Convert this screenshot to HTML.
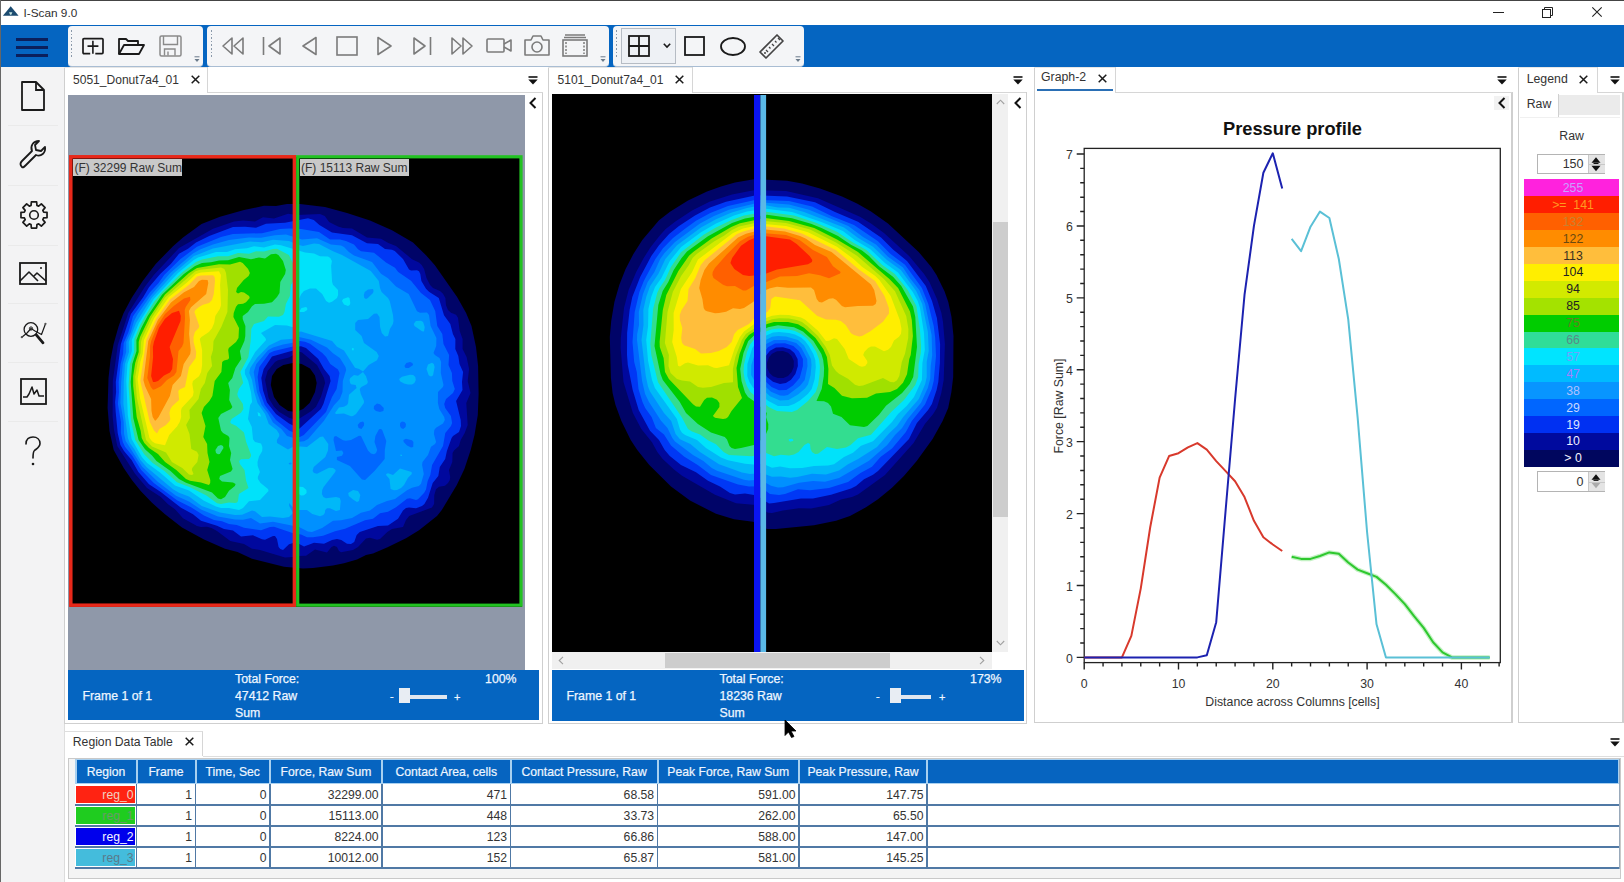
<!DOCTYPE html><html><head><meta charset="utf-8"><style>
*{margin:0;padding:0;box-sizing:border-box}
html,body{width:1624px;height:882px;overflow:hidden;background:#fff;font-family:"Liberation Sans",sans-serif;font-size:12px;color:#222}
.a{position:absolute}
.t{position:absolute;white-space:nowrap;line-height:1}
</style></head><body><div class="a" style="left:0px;top:0px;width:1624px;height:1px;background:#444"></div>
<div class="a" style="left:0px;top:0px;width:1px;height:882px;background:#666"></div>
<svg class="a" style="left:2px;top:5px;overflow:visible" width="18" height="13" viewBox="0 0 18 13"><path d="M0.9 10.8L8.7 1.3L16.6 10.8Z" fill="#1b4b70"/><path d="M7 7.3H10.4L9.3 9.8H8.1Z" fill="#c9e6e2"/></svg>
<div class="t" style="left:23.5px;top:7.61px;font-size:11.8px;color:#2e2e2e">I-Scan 9.0</div>
<div class="a" style="left:1493px;top:12px;width:11px;height:1px;background:#222"></div>
<svg class="a" style="left:1542px;top:7px;overflow:visible" width="11" height="11" viewBox="0 0 11 11"><rect x="0.5" y="2.5" width="8" height="8" fill="none" stroke="#222" stroke-width="1"/><path d="M2.5 2.5V0.5H10.5V8.5H8.5" fill="none" stroke="#222" stroke-width="1"/></svg>
<svg class="a" style="left:1592px;top:7px;overflow:visible" width="10" height="10" viewBox="0 0 10 10"><path d="M0.3 0.3L9.7 9.7M9.7 0.3L0.3 9.7" stroke="#222" stroke-width="1.1"/></svg>
<div class="a" style="left:1px;top:25px;width:1623px;height:42px;background:#0565c1"></div>
<div class="a" style="left:16px;top:38.2px;width:32px;height:2.6px;background:#0b1f5c"></div>
<div class="a" style="left:16px;top:46px;width:32px;height:2.6px;background:#0b1f5c"></div>
<div class="a" style="left:16px;top:54px;width:32px;height:2.6px;background:#0b1f5c"></div>
<div class="a" style="left:67.5px;top:26px;width:135.5px;height:40.5px;background:#f4f5f7;border-radius:4px;border-bottom:1px solid #a9bdd3"></div>
<div class="a" style="left:71.0px;top:30.0px;width:1.2px;height:1.6px;background:#8a99aa"></div>
<div class="a" style="left:71.0px;top:33.6px;width:1.2px;height:1.6px;background:#8a99aa"></div>
<div class="a" style="left:71.0px;top:37.2px;width:1.2px;height:1.6px;background:#8a99aa"></div>
<div class="a" style="left:71.0px;top:40.8px;width:1.2px;height:1.6px;background:#8a99aa"></div>
<div class="a" style="left:71.0px;top:44.4px;width:1.2px;height:1.6px;background:#8a99aa"></div>
<div class="a" style="left:71.0px;top:48.0px;width:1.2px;height:1.6px;background:#8a99aa"></div>
<div class="a" style="left:71.0px;top:51.6px;width:1.2px;height:1.6px;background:#8a99aa"></div>
<div class="a" style="left:71.0px;top:55.2px;width:1.2px;height:1.6px;background:#8a99aa"></div>
<svg class="a" style="left:194px;top:56px;overflow:visible" width="6" height="7" viewBox="0 0 6 7"><path d="M0.5 0.8H5.5" stroke="#6a7a8a" stroke-width="1"/><path d="M0.5 3L3 6L5.5 3Z" fill="#6a7a8a"/></svg>
<div class="a" style="left:207px;top:26px;width:401.5px;height:40.5px;background:#f4f5f7;border-radius:4px;border-bottom:1px solid #a9bdd3"></div>
<div class="a" style="left:210.5px;top:30.0px;width:1.2px;height:1.6px;background:#8a99aa"></div>
<div class="a" style="left:210.5px;top:33.6px;width:1.2px;height:1.6px;background:#8a99aa"></div>
<div class="a" style="left:210.5px;top:37.2px;width:1.2px;height:1.6px;background:#8a99aa"></div>
<div class="a" style="left:210.5px;top:40.8px;width:1.2px;height:1.6px;background:#8a99aa"></div>
<div class="a" style="left:210.5px;top:44.4px;width:1.2px;height:1.6px;background:#8a99aa"></div>
<div class="a" style="left:210.5px;top:48.0px;width:1.2px;height:1.6px;background:#8a99aa"></div>
<div class="a" style="left:210.5px;top:51.6px;width:1.2px;height:1.6px;background:#8a99aa"></div>
<div class="a" style="left:210.5px;top:55.2px;width:1.2px;height:1.6px;background:#8a99aa"></div>
<svg class="a" style="left:599.5px;top:56px;overflow:visible" width="6" height="7" viewBox="0 0 6 7"><path d="M0.5 0.8H5.5" stroke="#6a7a8a" stroke-width="1"/><path d="M0.5 3L3 6L5.5 3Z" fill="#6a7a8a"/></svg>
<div class="a" style="left:612.5px;top:26px;width:191.5px;height:40.5px;background:#f4f5f7;border-radius:4px;border-bottom:1px solid #a9bdd3"></div>
<div class="a" style="left:616.0px;top:30.0px;width:1.2px;height:1.6px;background:#8a99aa"></div>
<div class="a" style="left:616.0px;top:33.6px;width:1.2px;height:1.6px;background:#8a99aa"></div>
<div class="a" style="left:616.0px;top:37.2px;width:1.2px;height:1.6px;background:#8a99aa"></div>
<div class="a" style="left:616.0px;top:40.8px;width:1.2px;height:1.6px;background:#8a99aa"></div>
<div class="a" style="left:616.0px;top:44.4px;width:1.2px;height:1.6px;background:#8a99aa"></div>
<div class="a" style="left:616.0px;top:48.0px;width:1.2px;height:1.6px;background:#8a99aa"></div>
<div class="a" style="left:616.0px;top:51.6px;width:1.2px;height:1.6px;background:#8a99aa"></div>
<div class="a" style="left:616.0px;top:55.2px;width:1.2px;height:1.6px;background:#8a99aa"></div>
<svg class="a" style="left:795px;top:56px;overflow:visible" width="6" height="7" viewBox="0 0 6 7"><path d="M0.5 0.8H5.5" stroke="#6a7a8a" stroke-width="1"/><path d="M0.5 3L3 6L5.5 3Z" fill="#6a7a8a"/></svg>
<svg class="a" style="left:82px;top:38px;overflow:visible" width="22" height="17" viewBox="0 0 22 17"><path d="M8.2 15.6H2Q1 15.6 1 14.6V1.6Q1 0.6 2 0.6H20Q21 0.6 21 1.6V14.6Q21 15.6 20 15.6H13.3" fill="none" stroke="#1a1a1a" stroke-width="1.7"/><path d="M10.9 2.8V15.8M5.5 8.1H16.4" stroke="#1a1a1a" stroke-width="1.6"/></svg>
<svg class="a" style="left:118px;top:37px;overflow:visible" width="27" height="19" viewBox="0 0 27 19"><path d="M1 17V2H8L10 4H20V8" fill="none" stroke="#1a1a1a" stroke-width="1.8" stroke-linejoin="round"/><path d="M1 17L6 8H26L21 17Z" fill="none" stroke="#1a1a1a" stroke-width="1.8" stroke-linejoin="round"/></svg>
<svg class="a" style="left:159px;top:35px;overflow:visible" width="23" height="22" viewBox="0 0 23 22"><rect x="1" y="1" width="21" height="20" rx="1.5" fill="none" stroke="#8a8a8a" stroke-width="1.5"/><path d="M4.5 1V9.5H18.5V1M5.5 20.5V14H16V20.5M9 16.5V20.5" fill="none" stroke="#8a8a8a" stroke-width="1.4"/></svg>
<svg class="a" style="left:222px;top:37px;overflow:visible" width="22" height="18" viewBox="0 0 22 18"><path d="M10 1L1 9L10 17ZM21 1L12 9L21 17Z" fill="none" stroke="#7b7b7b" stroke-width="1.6" stroke-linejoin="round"/></svg>
<svg class="a" style="left:262px;top:36px;overflow:visible" width="19" height="20" viewBox="0 0 19 20"><path d="M1.5 1V19" stroke="#7b7b7b" stroke-width="1.6"/><path d="M18 2L7 10L18 18Z" fill="none" stroke="#7b7b7b" stroke-width="1.6" stroke-linejoin="round"/></svg>
<svg class="a" style="left:301px;top:36px;overflow:visible" width="16" height="20" viewBox="0 0 16 20"><path d="M15 1.5L2 10L15 18.5Z" fill="none" stroke="#7b7b7b" stroke-width="1.6" stroke-linejoin="round"/></svg>
<svg class="a" style="left:336px;top:36px;overflow:visible" width="22" height="20" viewBox="0 0 22 20"><rect x="1" y="1" width="20" height="18" fill="none" stroke="#7b7b7b" stroke-width="1.6"/></svg>
<svg class="a" style="left:377px;top:36px;overflow:visible" width="16" height="20" viewBox="0 0 16 20"><path d="M1 1.5L14 10L1 18.5Z" fill="none" stroke="#7b7b7b" stroke-width="1.6" stroke-linejoin="round"/></svg>
<svg class="a" style="left:413px;top:36px;overflow:visible" width="19" height="20" viewBox="0 0 19 20"><path d="M17.5 1V19" stroke="#7b7b7b" stroke-width="1.6"/><path d="M1 2L12 10L1 18Z" fill="none" stroke="#7b7b7b" stroke-width="1.6" stroke-linejoin="round"/></svg>
<svg class="a" style="left:451px;top:37px;overflow:visible" width="22" height="18" viewBox="0 0 22 18"><path d="M1 1L10 9L1 17ZM12 1L21 9L12 17Z" fill="none" stroke="#7b7b7b" stroke-width="1.6" stroke-linejoin="round"/></svg>
<svg class="a" style="left:486px;top:38px;overflow:visible" width="27" height="15" viewBox="0 0 27 15"><rect x="1" y="1" width="17" height="13" rx="1" fill="none" stroke="#7b7b7b" stroke-width="1.6"/><path d="M18 6L25 2V13L18 9" fill="none" stroke="#7b7b7b" stroke-width="1.6" stroke-linejoin="round"/></svg>
<svg class="a" style="left:524px;top:35px;overflow:visible" width="26" height="21" viewBox="0 0 26 21"><path d="M1 5H7L9 1H17L19 5H25V20H1Z" fill="none" stroke="#7b7b7b" stroke-width="1.6" stroke-linejoin="round"/><circle cx="13" cy="12" r="5" fill="none" stroke="#7b7b7b" stroke-width="1.6"/></svg>
<svg class="a" style="left:562px;top:34px;overflow:visible" width="26" height="23" viewBox="0 0 26 23"><path d="M3 1H23M2 3.5H24" stroke="#7b7b7b" stroke-width="1.5"/><rect x="1" y="6" width="24" height="16" fill="none" stroke="#7b7b7b" stroke-width="1.6"/><path d="M4 8V20M22 8V20" stroke="#7b7b7b" stroke-width="1.5" stroke-dasharray="2 1.5"/></svg>
<div class="a" style="left:621px;top:28px;width:55px;height:36px;border:1px solid #b6bcc4;background:#eef1f5"></div>
<svg class="a" style="left:628px;top:35px;overflow:visible" width="22" height="22" viewBox="0 0 22 22"><rect x="1" y="1" width="20" height="20" fill="none" stroke="#1a1a1a" stroke-width="1.8"/><path d="M11 1V21M1 11H21" stroke="#1a1a1a" stroke-width="1.8"/></svg>
<svg class="a" style="left:663px;top:43px;overflow:visible" width="8" height="5" viewBox="0 0 8 5"><path d="M0.8 0.8L4 4L7.2 0.8" fill="none" stroke="#1a1a1a" stroke-width="1.6"/></svg>
<svg class="a" style="left:684px;top:36px;overflow:visible" width="21" height="20" viewBox="0 0 21 20"><rect x="1" y="1" width="19" height="18" fill="none" stroke="#1a1a1a" stroke-width="1.8"/></svg>
<svg class="a" style="left:720px;top:37px;overflow:visible" width="26" height="19" viewBox="0 0 26 19"><ellipse cx="13" cy="9.5" rx="12" ry="8.5" fill="none" stroke="#1a1a1a" stroke-width="1.8"/></svg>
<svg class="a" style="left:758px;top:33px;overflow:visible" width="27" height="27" viewBox="0 0 27 27"><path d="M2 19L19 2L25 8L8 25Z" fill="none" stroke="#444" stroke-width="1.7" stroke-linejoin="round"/><path d="M8 17L10 19M11 14L12.5 15.5M14 11L16 13M17 8L18.5 9.5M20 5L22 7" stroke="#444" stroke-width="1.3"/><circle cx="7" cy="20" r="1" fill="#444"/></svg>
<div class="a" style="left:1px;top:67px;width:63px;height:815px;background:#f3f3f4"></div>
<div class="a" style="left:64px;top:67px;width:1px;height:815px;background:#dcdcdc"></div>
<svg class="a" style="left:21px;top:81px;overflow:visible" width="24" height="30" viewBox="0 0 24 30"><path d="M1 1H15L23 9V29H1Z" fill="none" stroke="#1a1a1a" stroke-width="1.8" stroke-linejoin="round"/><path d="M15 1V9H23" fill="none" stroke="#1a1a1a" stroke-width="1.8"/></svg>
<svg class="a" style="left:19px;top:140px;overflow:visible" width="28" height="30" viewBox="0 0 28 30"><path d="M3 27 C1 25 1 23 3 21 L13 11 C11 6 14 1 20 1 L16 5 L17 10 L22 11 L26 7 C27 13 22 17 17 15 L7 25 C5 27 4 28 3 27 Z" fill="none" stroke="#1a1a1a" stroke-width="1.8" stroke-linejoin="round"/></svg>
<svg class="a" style="left:19.5px;top:200.5px;overflow:visible" width="28" height="28" viewBox="0 0 28 28"><polygon points="27.03,11.36 27.03,16.64 23.55,16.96 22.84,18.67 25.09,21.35 21.35,25.09 18.67,22.84 16.96,23.55 16.64,27.03 11.36,27.03 11.04,23.55 9.33,22.84 6.65,25.09 2.91,21.35 5.16,18.67 4.45,16.96 0.97,16.64 0.97,11.36 4.45,11.04 5.16,9.33 2.91,6.65 6.65,2.91 9.33,5.16 11.04,4.45 11.36,0.97 16.64,0.97 16.96,4.45 18.67,5.16 21.35,2.91 25.09,6.65 22.84,9.33 23.55,11.04" fill="none" stroke="#1a1a1a" stroke-width="1.7" stroke-linejoin="round"/><circle cx="14" cy="14" r="4.3" fill="none" stroke="#1a1a1a" stroke-width="1.6"/></svg>
<svg class="a" style="left:19px;top:262px;overflow:visible" width="28" height="24" viewBox="0 0 28 24"><rect x="1" y="1" width="26" height="21" fill="none" stroke="#1a1a1a" stroke-width="1.8"/><path d="M1 19L10 10L19 19M14 15L18 11L27 19" fill="none" stroke="#1a1a1a" stroke-width="1.6" stroke-linejoin="round"/><circle cx="22" cy="6" r="1" fill="#1a1a1a"/></svg>
<svg class="a" style="left:19px;top:316px;overflow:visible" width="29" height="29" viewBox="0 0 29 29"><circle cx="11.9" cy="13.5" r="6.8" fill="none" stroke="#1a1a1a" stroke-width="1.3"/><path d="M17.3 18.8L24 26.8" stroke="#1a1a1a" stroke-width="2.8" stroke-linecap="round"/><path d="M2.8 21.2L8 17L12 12.5L16 15L22.5 18.5L26.5 7.8" fill="none" stroke="#1a1a1a" stroke-width="1.2" stroke-linejoin="round"/><circle cx="2.8" cy="21.2" r="1.1" fill="#555"/><circle cx="26.5" cy="7.8" r="1.1" fill="#555"/><circle cx="12" cy="12.5" r="1.6" fill="none" stroke="#1a1a1a" stroke-width="1"/></svg>
<svg class="a" style="left:20px;top:378px;overflow:visible" width="27" height="27" viewBox="0 0 27 27"><rect x="1" y="1" width="25" height="25" fill="none" stroke="#1a1a1a" stroke-width="1.8"/><path d="M3 19H7L9 16L12 9L14 16L17 12L19 18H24" fill="none" stroke="#1a1a1a" stroke-width="1.5" stroke-linejoin="round"/></svg>
<svg class="a" style="left:24px;top:436px;overflow:visible" width="18" height="31" viewBox="0 0 18 31"><path d="M2 8C2 3 5 1 9 1C13 1 16 3.5 16 7.5C16 11 13 12.5 10.5 14.5C9 15.7 9 17 9 22" fill="none" stroke="#1a1a1a" stroke-width="1.6" stroke-linecap="round"/><circle cx="9" cy="28" r="1.3" fill="#1a1a1a"/></svg>
<div class="a" style="left:8px;top:125px;width:50px;height:1px;background:#eaeaea"></div>
<div class="a" style="left:8px;top:185px;width:50px;height:1px;background:#eaeaea"></div>
<div class="a" style="left:8px;top:245px;width:50px;height:1px;background:#eaeaea"></div>
<div class="a" style="left:8px;top:303px;width:50px;height:1px;background:#eaeaea"></div>
<div class="a" style="left:8px;top:362px;width:50px;height:1px;background:#eaeaea"></div>
<div class="a" style="left:8px;top:421px;width:50px;height:1px;background:#eaeaea"></div>
<div class="a" style="left:64.3px;top:67px;width:478.7px;height:656.5px;border:1.5px solid #cfcfcf;border-top:none;border-right:none;background:#fff"></div>
<div class="a" style="left:541.5px;top:92px;width:1.5px;height:631.5px;background:#cfcfcf"></div>
<div class="a" style="left:207.5px;top:92px;width:335px;height:1px;background:#d6d6d6"></div>
<div class="a" style="left:64.3px;top:67px;width:143.2px;height:1px;background:#e6e6e6"></div>
<div class="a" style="left:207px;top:67px;width:1px;height:26px;background:#d6d6d6"></div>
<div class="t" style="left:73px;top:73.60px;font-size:12.05px;color:#333">5051_Donut7a4_01</div>
<svg class="a" style="left:190.5px;top:75px;overflow:visible" width="9" height="9" viewBox="0 0 9 9"><path d="M0.7 0.7L8.3 8.3M8.3 0.7L0.7 8.3" stroke="#1a1a1a" stroke-width="1.5"/></svg>
<svg class="a" style="left:528px;top:76px;overflow:visible" width="10" height="9" viewBox="0 0 10 9"><path d="M0.5 1H9.5" stroke="#111" stroke-width="1.6"/><path d="M0.3 3.6H9.7L5 8.6Z" fill="#111"/></svg>
<div class="a" style="left:67.5px;top:95px;width:457px;height:575px;background:#8f98a9"></div>
<svg class="a" style="left:529px;top:97px;overflow:visible" width="8" height="12" viewBox="0 0 8 12"><path d="M6.5 1L1.5 6L6.5 11" fill="none" stroke="#111" stroke-width="2"/></svg>
<svg class="a" style="left:0;top:0" width="1624" height="882">
<rect x="70" y="157" width="452" height="450" fill="#000"/>
<path fill="#000468" fill-rule="evenodd" d="M313.0 568.1L303.0 568.4L284.0 566.7L252.0 558.7L237.5 552.0L225.0 548.7L204.0 539.5L182.0 527.4L165.0 514.3L152.0 502.8L140.7 491.0L131.9 480.0L123.7 468.0L113.7 450.0L109.5 431.0L107.6 408.0L108.5 378.0L110.5 360.0L113.6 344.0L118.7 326.0L123.6 313.0L131.6 298.0L142.7 281.0L155.7 264.0L173.0 246.2L183.0 237.5L201.5 224.0L220.0 216.7L244.0 210.1L264.0 205.7L276.0 206.0L287.0 204.1L300.0 204.1L325.0 206.9L347.0 212.9L370.0 220.6L392.0 230.3L413.0 242.5L426.0 255.2L434.7 265.0L457.1 297.0L466.1 313.0L471.5 326.0L476.0 347.0L478.1 366.0L478.6 394.0L477.8 415.0L474.5 435.0L470.7 450.0L464.4 469.0L456.8 485.0L441.8 510.0L437.0 515.9L419.0 530.2L406.0 538.2L387.0 547.6L373.0 553.4L366.0 554.9L357.0 559.4L344.0 563.3L333.0 565.6L313.0 568.1ZM296.2 412.0L303.1 409.0L309.6 403.0L315.0 392.0L316.7 383.0L315.0 375.6L310.0 368.5L301.7 364.0L294.0 362.8L283.3 365.0L276.7 369.0L272.0 375.9L270.8 385.0L274.0 396.9L279.6 405.0L288.2 411.0L296.2 412.0Z"/>
<path fill="#00089e" fill-rule="evenodd" d="M293.0 557.0L285.0 557.6L260.0 549.9L252.0 548.7L244.0 543.9L230.3 541.0L217.0 531.0L211.5 528.0L207.0 526.7L201.0 527.0L197.0 526.1L183.0 518.2L175.0 509.2L168.0 504.2L160.8 497.0L147.0 487.9L135.2 474.0L117.3 446.0L114.0 430.0L112.6 416.0L112.8 381.0L117.8 345.0L128.3 313.0L145.0 286.6L154.0 274.7L179.0 248.1L213.0 228.7L234.0 221.5L243.0 220.4L255.0 221.4L263.0 217.2L274.0 218.5L288.0 213.8L297.0 215.0L320.0 214.0L324.8 216.0L329.1 222.0L338.0 226.6L343.0 228.1L352.0 228.4L367.0 237.6L381.0 238.7L388.3 243.0L396.0 245.9L412.0 259.2L419.0 262.6L421.7 265.0L424.1 269.0L426.5 278.0L430.1 285.0L433.0 287.9L440.0 291.0L443.0 293.7L445.4 298.0L446.0 305.2L448.0 310.1L451.0 312.8L456.0 314.8L458.0 317.8L459.7 331.0L462.6 339.0L462.6 349.0L466.6 357.0L469.1 369.0L467.7 381.0L470.5 393.0L466.3 403.0L467.7 425.0L464.7 433.0L460.7 440.0L459.0 446.0L454.0 450.5L452.6 453.0L452.3 462.0L449.0 470.0L450.2 477.0L449.8 480.0L448.0 483.1L445.0 485.8L439.0 486.8L436.0 489.3L434.3 495.0L434.1 504.0L432.0 507.5L409.2 516.0L406.0 519.9L403.0 527.1L392.0 529.0L387.3 532.0L380.0 539.0L377.0 539.7L370.0 537.7L366.0 538.4L358.0 547.0L353.0 550.1L341.0 552.3L339.0 551.0L337.0 546.9L334.0 545.8L331.5 547.0L327.0 552.6L315.0 549.5L306.0 555.8L297.0 556.0L293.0 557.0ZM295.5 421.0L311.0 411.2L316.0 406.8L321.0 396.7L325.1 383.0L324.0 378.0L317.0 365.0L302.0 352.6L298.0 351.3L294.0 352.0L293.0 355.3L289.0 357.5L278.0 360.3L275.0 362.0L267.6 371.0L265.1 380.0L268.6 398.0L274.0 406.7L279.0 411.8L289.0 417.7L293.0 418.9L294.0 421.6L295.5 421.0Z"/>
<path fill="#0038f5" fill-rule="evenodd" d="M283.0 550.1L280.3 549.0L278.6 547.0L277.0 539.0L275.0 536.0L273.0 535.9L265.0 539.7L262.0 539.3L253.0 535.3L241.0 536.4L233.0 530.4L224.0 529.1L217.0 525.7L201.0 520.8L193.0 514.3L181.0 507.7L160.8 492.0L149.0 484.3L138.4 472.0L131.6 460.0L124.0 451.0L120.4 445.0L117.7 433.0L115.7 412.0L115.1 402.0L116.1 392.0L115.8 382.0L120.9 344.0L130.9 314.0L143.0 297.6L149.0 287.3L160.2 274.0L171.0 263.8L179.0 253.8L188.0 248.8L196.0 242.6L209.2 236.0L233.0 227.1L245.0 226.7L256.0 227.8L266.0 223.8L285.0 222.7L308.0 218.3L313.8 220.0L319.4 225.0L332.0 232.6L352.0 235.3L367.0 243.3L378.0 244.1L385.0 249.0L392.0 249.8L394.8 251.0L403.0 259.0L409.0 269.4L411.0 270.4L417.0 270.2L419.0 271.3L420.3 274.0L421.4 281.0L426.0 288.8L429.0 291.8L438.8 298.0L444.0 315.3L450.3 324.0L452.9 334.0L455.4 339.0L455.3 349.0L458.3 356.0L459.5 364.0L463.1 372.0L462.0 382.0L462.5 390.0L456.1 401.0L460.7 420.0L461.0 426.0L459.0 431.9L453.0 436.0L451.6 438.0L446.9 451.0L445.2 459.0L439.8 467.0L438.3 476.0L432.7 483.0L428.0 497.7L424.4 504.0L422.0 506.0L416.0 508.2L409.0 507.4L406.0 508.0L403.0 510.5L398.0 518.7L388.0 525.5L378.0 526.1L359.8 532.0L356.7 535.0L354.2 542.0L351.0 544.0L347.0 543.8L341.3 540.0L337.0 539.0L332.0 540.0L324.0 543.8L314.0 542.8L304.0 546.4L297.2 543.0L294.0 542.7L289.0 544.3L283.0 550.1ZM294.1 431.0L299.0 428.9L320.9 409.0L323.4 404.0L330.6 381.0L329.6 376.0L324.0 369.1L318.3 359.0L306.0 348.1L301.0 346.2L294.0 347.0L293.0 350.6L272.0 356.5L263.7 369.0L261.3 378.0L263.0 390.3L267.0 402.6L276.0 414.1L289.0 423.6L293.0 425.5L294.1 431.0Z"/>
<path fill="#0068ff" fill-rule="evenodd" d="M313.0 537.2L307.0 537.2L301.0 534.4L294.0 533.4L274.0 526.7L270.0 527.0L261.0 530.2L244.0 527.8L236.8 525.0L229.0 524.0L222.0 521.2L214.0 520.0L204.0 515.5L191.0 507.2L177.0 500.3L153.8 483.0L141.0 469.7L132.5 456.0L125.0 446.8L122.8 442.0L120.9 433.0L121.0 422.0L117.9 404.0L119.0 392.0L118.7 382.0L120.6 364.0L123.1 354.0L123.7 343.0L128.5 332.0L133.0 316.3L150.0 292.3L158.6 283.0L164.2 275.0L180.5 259.0L197.0 246.8L221.0 237.0L233.0 234.0L262.0 233.2L280.0 229.1L289.0 228.4L301.0 228.9L319.0 232.0L330.0 239.5L340.0 239.6L346.0 241.0L354.0 244.6L358.0 249.3L361.0 251.2L374.0 252.7L386.0 262.5L395.0 267.7L398.2 272.0L411.0 280.7L421.0 293.1L430.0 300.0L435.2 311.0L437.3 326.0L442.3 334.0L443.5 344.0L449.1 355.0L448.5 365.0L451.9 373.0L452.3 381.0L454.8 389.0L453.0 393.0L446.0 399.0L444.2 404.0L445.2 408.0L450.9 416.0L452.1 423.0L451.0 426.0L445.3 433.0L443.0 446.0L432.1 465.0L430.3 475.0L427.7 481.0L426.0 489.4L424.0 493.1L418.0 499.3L416.0 500.0L410.0 498.2L407.0 498.8L396.0 507.3L388.0 511.8L380.0 513.3L373.0 518.8L365.0 520.2L345.0 528.8L335.0 531.3L323.0 535.8L313.0 537.2ZM299.8 437.0L303.8 435.0L326.0 412.0L332.0 397.0L336.6 389.0L339.5 373.0L338.0 369.4L330.3 364.0L326.1 357.0L322.3 353.0L310.0 343.8L305.0 341.8L300.0 341.1L294.0 342.0L293.0 346.5L274.0 350.9L269.6 353.0L259.3 367.0L257.6 377.0L259.4 391.0L264.7 405.0L276.0 420.0L289.0 430.6L293.0 432.2L294.0 437.6L299.8 437.0Z"/>
<path fill="#0090ff" fill-rule="evenodd" d="M312.0 532.1L308.0 531.6L299.0 527.1L273.0 521.8L260.0 523.5L251.0 518.0L243.0 519.7L235.0 519.4L218.0 516.4L201.0 509.6L189.0 501.4L176.0 495.8L158.0 482.0L142.0 466.4L125.7 441.0L124.1 434.0L123.7 422.0L120.4 403.0L121.2 382.0L122.8 364.0L126.2 352.0L126.2 342.0L130.8 332.0L134.0 320.9L137.8 314.0L150.4 296.0L170.2 273.0L193.0 253.4L200.0 249.5L213.0 244.6L229.0 240.0L249.0 237.5L261.0 237.8L275.0 235.3L286.0 234.5L302.0 239.5L317.0 238.3L331.0 244.6L341.0 245.4L344.0 246.9L348.9 252.0L354.0 255.5L372.0 262.1L381.0 273.8L388.0 278.3L396.0 286.4L408.7 294.0L417.0 311.2L420.0 312.7L427.0 312.6L429.0 314.9L430.6 326.0L436.4 338.0L436.2 346.0L433.5 353.0L434.9 355.0L439.5 358.0L441.1 362.0L440.8 373.0L443.5 385.0L442.9 387.0L438.0 392.0L437.9 403.0L439.3 409.0L444.2 417.0L444.8 420.0L443.0 423.4L436.0 427.8L434.3 430.0L433.9 434.0L436.1 442.0L435.0 443.9L431.0 446.8L428.0 455.0L422.5 462.0L422.1 465.0L423.8 474.0L421.0 483.8L418.9 486.0L412.0 487.8L407.0 490.3L395.0 498.9L387.0 500.9L377.0 505.0L370.0 510.6L361.0 512.7L352.0 518.0L341.0 520.2L333.0 520.7L322.1 528.0L312.0 532.1ZM297.3 442.0L304.0 441.2L308.1 439.0L324.0 420.7L334.0 405.2L339.8 399.0L342.5 392.0L342.8 381.0L346.2 370.0L345.5 367.0L339.9 358.0L333.0 353.3L327.0 347.6L311.0 339.8L299.0 337.0L294.0 337.6L293.0 342.8L283.0 344.4L273.0 347.6L268.0 350.3L256.3 364.0L253.7 372.0L256.9 392.0L261.6 405.0L267.7 413.0L273.0 422.5L281.4 429.0L287.0 436.1L293.0 437.8L294.0 442.3L297.3 442.0ZM408.8 368.0L413.1 365.0L412.4 363.0L410.0 361.9L406.3 363.0L404.4 366.0L405.6 368.0L408.8 368.0ZM383.4 411.0L383.8 408.0L380.0 404.2L377.0 403.6L374.0 406.0L373.8 409.0L376.0 411.0L380.0 411.9L383.4 411.0ZM361.5 429.0L364.0 425.5L364.1 423.0L363.0 421.4L360.0 422.3L357.7 425.0L358.6 428.0L361.5 429.0ZM403.2 429.0L405.6 427.0L406.0 424.0L404.5 422.0L402.0 421.6L400.1 423.0L400.0 426.0L401.0 428.1L403.2 429.0ZM365.1 480.0L374.5 471.0L384.7 459.0L384.8 450.0L386.3 441.0L382.2 430.0L381.0 429.1L379.0 429.3L375.4 436.0L374.5 442.0L377.2 450.0L376.0 453.0L374.0 454.2L371.0 453.6L368.0 450.5L361.0 435.9L359.0 435.7L351.0 440.0L346.0 440.7L343.0 440.3L336.0 436.1L334.0 436.7L333.5 440.0L336.0 451.1L342.0 450.6L343.4 453.0L342.0 455.7L336.9 457.0L336.9 460.0L349.9 466.0L362.0 479.6L365.1 480.0ZM413.2 447.0L413.4 442.0L412.0 440.2L406.0 438.8L403.4 440.0L403.7 442.0L407.0 445.4L411.0 447.6L413.2 447.0Z"/>
<path fill="#00b8f8" fill-rule="evenodd" d="M283.0 518.0L270.0 516.4L262.0 517.0L255.0 511.2L252.0 510.4L242.0 514.7L235.0 514.9L220.0 512.5L201.7 506.0L189.0 496.4L179.0 492.8L173.0 489.2L147.0 467.5L140.4 460.0L134.2 449.0L129.8 443.0L127.9 438.0L123.4 404.0L123.8 381.0L125.0 364.0L129.0 352.0L128.7 342.0L136.0 323.0L151.6 298.0L174.1 273.0L194.0 256.1L213.0 248.5L250.0 241.6L262.0 242.3L273.0 239.8L289.0 240.9L298.0 244.8L303.0 245.9L314.0 243.6L319.0 243.9L333.0 251.3L342.0 254.9L370.8 271.0L378.8 281.0L380.0 288.0L381.6 292.0L388.0 298.0L389.7 301.0L393.0 315.0L393.5 321.0L392.9 324.0L389.9 329.0L388.0 336.1L385.0 336.4L381.8 333.0L380.1 327.0L379.5 317.0L377.0 313.4L374.0 313.7L368.0 318.9L358.0 319.9L355.2 323.0L355.2 330.0L361.6 336.0L364.0 343.1L376.6 352.0L378.8 356.0L377.0 360.3L368.7 365.0L363.0 371.4L359.2 369.0L355.0 367.7L344.0 350.5L337.0 346.7L332.1 341.0L301.0 331.6L294.0 332.5L293.0 338.7L281.0 339.7L269.0 345.4L257.0 357.7L250.2 368.0L249.3 373.0L252.0 380.0L254.2 392.0L257.5 403.0L265.1 414.0L268.8 424.0L276.7 430.0L279.2 434.0L279.3 436.0L276.9 440.0L277.0 443.0L288.0 449.5L293.0 446.7L294.0 447.7L300.0 446.6L307.0 447.1L320.0 436.9L323.0 436.6L328.3 444.0L328.0 450.6L325.3 457.0L313.7 467.0L312.6 471.0L314.0 473.0L317.0 473.8L329.0 467.8L333.0 467.9L335.7 470.0L335.2 472.0L323.6 487.0L322.2 490.0L321.9 494.0L323.4 497.0L326.0 498.3L336.0 496.9L339.8 498.0L340.7 501.0L339.9 510.0L336.0 511.1L330.0 508.3L327.0 508.2L325.2 510.0L324.8 513.0L323.3 515.0L320.0 516.3L312.3 514.0L307.0 510.0L295.3 510.0L289.0 502.9L289.2 506.0L293.0 513.0L289.0 517.0L283.0 518.0ZM367.9 298.0L373.0 293.0L373.6 291.0L373.0 289.0L368.0 289.6L364.7 292.0L363.8 295.0L364.3 298.0L366.0 298.9L367.9 298.0ZM424.0 331.6L422.0 331.3L414.5 326.0L413.7 324.0L415.9 321.0L421.0 320.8L423.1 322.0L424.7 327.0L424.0 331.6ZM432.0 376.3L430.0 376.3L428.6 375.0L426.5 369.0L428.0 364.5L432.0 362.8L433.8 364.0L434.6 367.0L433.1 375.0L432.0 376.3ZM353.0 416.0L351.0 416.2L344.0 413.5L336.0 414.1L335.0 413.0L339.0 407.4L344.0 406.7L347.1 405.0L348.1 403.0L349.0 394.8L356.6 388.0L355.7 385.0L351.0 384.3L350.2 383.0L349.5 380.0L350.3 378.0L354.0 374.9L358.0 375.7L363.0 372.1L366.0 376.2L367.9 382.0L367.0 384.0L361.3 387.0L359.7 389.0L360.8 394.0L364.0 401.0L363.9 403.0L356.0 413.9L353.0 416.0ZM412.0 384.4L408.0 384.6L404.0 383.6L400.0 381.2L399.2 379.0L402.0 376.8L410.0 374.8L413.2 375.0L415.3 377.0L415.8 380.0L414.4 383.0L412.0 384.4ZM402.0 456.1L400.7 456.0L400.0 454.7L402.0 454.8L402.0 456.1ZM291.8 464.0L291.0 462.6L288.9 463.0L288.8 464.0L290.0 464.6L291.8 464.0ZM397.0 490.1L394.0 490.3L390.6 489.0L389.5 479.0L386.1 475.0L386.2 474.0L388.0 473.2L393.0 474.9L400.0 468.6L411.6 472.0L411.8 474.0L408.0 477.7L404.0 485.0L401.0 488.0L397.0 490.1ZM359.0 501.1L357.0 501.9L353.0 499.6L348.8 496.0L348.2 493.0L353.1 490.0L358.0 491.0L360.3 495.0L359.0 501.1Z"/>
<path fill="#00e2fa" fill-rule="evenodd" d="M239.0 510.1L229.0 508.0L221.0 508.0L216.0 506.6L204.0 500.7L189.0 490.6L175.0 485.5L160.0 472.6L147.1 463.0L142.0 457.3L131.6 439.0L127.8 415.0L126.3 381.0L127.5 364.0L131.9 351.0L131.8 340.0L138.9 323.0L153.7 299.0L178.0 272.9L193.8 260.0L198.0 257.6L216.0 252.1L227.0 252.0L235.0 249.2L247.0 248.3L254.0 246.2L264.0 247.4L275.0 244.5L281.0 245.3L305.0 252.6L314.0 253.6L320.0 256.2L328.0 256.4L330.3 258.0L331.9 261.0L331.1 266.0L332.1 282.0L333.0 284.7L338.0 290.0L338.1 295.0L337.0 298.0L332.0 301.8L329.0 302.8L326.1 301.0L322.2 294.0L316.0 288.6L310.0 288.5L303.9 291.0L301.3 294.0L294.5 308.0L294.9 311.0L298.2 314.0L298.0 321.0L296.7 325.0L293.0 327.2L287.0 325.5L275.0 324.9L261.0 333.0L265.4 338.0L266.1 340.0L255.2 352.0L244.9 370.0L244.9 374.0L248.2 381.0L251.0 392.6L252.1 402.0L250.1 405.0L248.0 419.0L251.8 427.0L253.0 439.3L255.0 441.9L261.0 443.5L262.4 447.0L262.2 451.0L259.0 456.5L257.5 462.0L257.7 466.0L259.9 472.0L257.8 477.0L257.9 479.0L260.6 483.0L268.0 489.0L268.5 491.0L260.0 499.9L249.0 501.3L243.0 508.1L239.0 510.1ZM348.0 306.0L344.0 304.5L342.0 301.0L343.1 299.0L348.0 297.2L349.5 298.0L350.3 303.0L349.7 305.0L348.0 306.0ZM304.0 312.0L300.0 312.1L299.5 311.0L301.6 308.0L306.0 307.1L307.2 308.0L307.2 310.0L304.0 312.0ZM353.0 350.8L351.7 349.0L353.0 347.8L353.9 349.0L353.0 350.8ZM261.0 416.4L258.2 416.0L257.6 412.0L260.0 413.6L261.0 416.4ZM304.0 495.2L301.0 495.6L298.8 494.0L297.5 490.0L299.0 486.8L303.0 486.9L306.4 490.0L306.6 493.0L304.0 495.2Z"/>
<path fill="#33dd90" fill-rule="evenodd" d="M235.0 503.1L229.0 502.5L221.0 503.9L217.0 503.2L206.0 495.3L190.0 487.2L177.0 482.3L164.4 471.0L152.7 463.0L144.0 454.1L135.2 440.0L130.9 420.0L128.6 386.0L129.9 364.0L134.1 352.0L134.4 339.0L139.8 326.0L145.8 315.0L154.0 302.0L162.0 292.0L182.6 272.0L196.0 262.0L202.0 259.5L218.0 256.2L228.0 256.3L238.0 253.1L249.0 253.7L256.0 251.3L264.0 251.5L273.0 249.0L277.0 248.8L288.9 255.0L293.8 265.0L298.5 269.0L299.1 272.0L290.9 285.0L289.9 296.0L285.9 304.0L284.5 312.0L283.0 315.0L279.0 316.8L268.0 316.4L264.0 321.0L254.0 324.1L251.3 329.0L250.7 341.0L248.4 357.0L240.4 372.0L243.2 383.0L239.0 388.8L237.3 394.0L238.0 396.8L242.9 404.0L243.4 409.0L241.0 412.8L231.6 419.0L230.2 422.0L231.0 423.4L236.0 425.7L244.0 432.4L246.2 442.0L251.1 455.0L250.7 457.0L249.0 459.0L241.0 459.3L239.1 461.0L239.9 464.0L244.5 470.0L246.0 480.6L248.5 488.0L238.9 494.0L238.0 501.0L237.0 502.4L235.0 503.1Z"/>
<path fill="#00cc00" fill-rule="evenodd" d="M221.0 499.2L218.0 498.5L212.0 492.6L186.0 482.7L179.0 479.0L170.5 471.0L156.5 461.0L152.0 455.4L145.0 449.2L138.6 440.0L133.3 418.0L130.7 382.0L132.3 364.0L136.5 351.0L136.4 340.0L141.0 328.6L147.6 316.0L162.0 294.8L183.9 274.0L195.0 266.0L202.0 263.1L211.0 262.3L219.0 260.4L228.0 260.2L239.0 257.0L251.0 259.3L259.0 257.5L265.0 258.4L271.0 254.2L276.0 253.8L278.4 255.0L283.0 261.0L285.8 270.0L285.1 274.0L280.3 282.0L279.5 293.0L277.0 297.1L272.0 302.2L264.0 303.7L255.0 304.1L252.0 306.3L248.0 312.0L242.7 316.0L242.7 319.0L245.4 326.0L245.3 336.0L244.4 341.0L239.9 351.0L241.3 359.0L235.4 368.0L232.3 378.0L228.2 383.0L229.9 390.0L229.2 400.0L232.4 407.0L230.9 409.0L221.0 413.9L218.3 418.0L221.0 430.6L223.0 432.9L228.3 436.0L229.5 438.0L229.0 446.0L231.2 453.0L230.0 460.0L232.6 469.0L231.0 471.6L220.0 476.0L219.2 479.0L222.0 481.5L233.0 482.4L235.6 484.0L234.9 486.0L229.0 490.7L225.0 496.9L221.0 499.2ZM219.8 454.0L223.5 448.0L223.0 446.0L221.0 444.9L218.0 446.0L215.4 450.0L216.0 453.1L218.0 454.3L219.8 454.0Z"/>
<path fill="#a0e000" fill-rule="evenodd" d="M209.0 485.1L201.0 482.6L190.0 480.7L186.0 479.0L176.3 470.0L165.1 462.0L158.0 454.0L149.0 448.1L144.3 443.0L141.7 438.0L140.7 431.0L136.7 417.0L133.2 386.0L133.2 376.0L135.2 363.0L138.7 352.0L138.7 342.0L140.0 337.0L150.0 316.4L165.0 294.5L189.0 273.1L197.0 268.1L219.0 264.3L230.0 264.5L240.0 261.7L242.7 263.0L248.1 269.0L249.9 273.0L248.6 276.0L243.7 280.0L237.0 288.0L236.1 292.0L238.0 293.6L241.0 292.1L244.0 292.5L249.1 296.0L249.7 298.0L246.0 302.3L243.0 303.7L238.0 304.2L236.0 306.8L233.7 313.0L233.4 317.0L239.0 328.0L238.5 338.0L236.0 342.0L228.8 348.0L228.2 350.0L229.1 358.0L228.0 359.4L224.0 360.4L222.2 362.0L221.4 372.0L214.7 381.0L212.4 396.0L209.4 401.0L203.9 407.0L201.6 413.0L205.5 426.0L203.3 437.0L207.1 444.0L207.5 453.0L209.5 462.0L207.2 470.0L210.3 480.0L210.2 483.0L209.0 485.1Z"/>
<path fill="#d0ea00" fill-rule="evenodd" d="M192.0 475.1L189.0 474.4L182.3 468.0L171.9 462.0L166.0 452.6L152.0 446.4L146.0 440.0L136.9 398.0L135.2 377.0L137.8 362.0L140.5 353.0L141.0 342.0L142.1 338.0L151.5 318.0L165.0 297.5L195.0 271.6L200.0 269.8L221.0 267.4L224.4 269.0L226.0 273.0L228.0 290.0L227.4 312.0L221.3 327.0L213.5 341.0L213.0 350.0L210.9 357.0L212.1 366.0L207.3 373.0L204.8 383.0L200.9 389.0L198.5 399.0L189.4 410.0L189.9 418.0L186.1 425.0L189.5 434.0L191.3 449.0L197.0 451.7L198.6 455.0L197.3 462.0L192.2 468.0L191.9 470.0L193.5 474.0L192.0 475.1Z"/>
<path fill="#ffee00" fill-rule="evenodd" d="M165.0 445.2L155.0 443.3L152.0 441.3L149.5 438.0L140.0 397.9L137.6 379.0L140.4 362.0L142.7 354.0L144.0 340.0L154.2 318.0L168.9 297.0L187.0 282.6L196.0 274.0L201.0 272.5L219.0 271.3L220.9 275.0L220.1 285.0L221.0 305.3L219.8 309.0L215.3 316.0L214.2 323.0L212.0 328.3L208.9 332.0L201.4 337.0L199.8 339.0L202.1 350.0L202.1 365.0L201.1 372.0L199.0 376.2L192.9 381.0L192.3 384.0L193.6 392.0L192.9 396.0L181.7 408.0L180.9 411.0L181.2 417.0L179.7 422.0L177.0 426.6L169.2 435.0L165.0 445.2Z"/>
<path fill="#ffbe3c" fill-rule="evenodd" d="M157.0 433.6L154.0 430.4L149.8 422.0L140.3 381.0L146.3 340.0L156.6 318.0L170.0 299.5L189.0 284.8L197.0 276.6L201.0 275.4L213.0 275.3L214.6 277.0L215.0 281.0L213.8 294.0L212.0 299.9L209.1 303.0L203.0 304.7L199.1 307.0L195.4 310.0L194.4 312.0L199.3 326.0L198.7 328.0L194.9 332.0L193.5 337.0L193.6 342.0L196.2 352.0L195.7 358.0L189.0 367.2L185.0 387.0L180.0 389.2L178.3 391.0L179.1 400.0L172.4 406.0L170.4 409.0L169.4 413.0L170.3 419.0L169.7 421.0L166.0 424.9L159.4 429.0L157.0 433.6Z"/>
<path fill="#ff8c00" fill-rule="evenodd" d="M156.0 420.2L155.0 420.8L152.7 417.0L151.5 411.0L151.1 399.0L145.0 386.0L143.4 380.0L148.3 341.0L158.0 319.7L171.0 302.6L184.0 292.2L194.0 287.0L199.0 280.9L202.0 279.7L207.6 280.0L208.3 283.0L206.2 294.0L191.0 307.3L188.9 311.0L189.9 320.0L189.1 334.0L190.7 350.0L190.2 354.0L183.7 364.0L180.9 376.0L172.6 385.0L169.9 396.0L158.6 417.0L156.0 420.2Z"/>
<path fill="#ff6000" fill-rule="evenodd" d="M155.0 389.3L153.0 389.8L150.8 387.0L147.3 378.0L150.0 356.0L150.1 346.0L151.2 341.0L157.2 326.0L165.0 314.1L174.0 305.7L184.0 298.4L190.0 296.7L190.4 300.0L185.7 307.0L184.7 310.0L185.0 318.0L183.5 343.0L182.0 346.8L178.5 351.0L176.4 372.0L174.0 375.5L167.0 380.0L161.0 386.3L155.0 389.3Z"/>
<path fill="#ff1e00" fill-rule="evenodd" d="M155.0 382.0L153.0 381.9L151.1 376.0L153.1 357.0L152.9 347.0L153.9 342.0L159.0 327.7L165.0 318.7L172.0 313.0L179.0 310.7L180.8 316.0L180.5 321.0L169.6 347.0L173.0 359.0L172.2 369.0L170.0 372.4L164.0 375.6L158.0 380.9L155.0 382.0Z"/>
<rect x="70.8" y="156.8" width="223.6" height="448.4" fill="none" stroke="#e8281a" stroke-width="3.5"/>
<rect x="297.7" y="156.8" width="223.3" height="448.4" fill="none" stroke="#22c222" stroke-width="3.2"/>
</svg>
<div class="a" style="left:72.8px;top:159.3px;width:109px;height:16.4px;background:#c9c9c9"></div>
<div class="t" style="left:74.5px;top:162.44px;font-size:12px;color:#333">(F) 32299 Raw Sum</div>
<div class="a" style="left:299.5px;top:159.3px;width:109px;height:16.4px;background:#c9c9c9"></div>
<div class="t" style="left:301px;top:162.44px;font-size:12px;color:#333">(F) 15113 Raw Sum</div>
<div class="a" style="left:67.5px;top:669.5px;width:471.5px;height:50.5px;background:#0565c1"></div>
<div class="t" style="left:82.5px;top:690.19px;font-size:12.3px;color:#eef6ff;-webkit-text-stroke:0.25px #eef6ff">Frame 1 of 1</div>
<div class="t" style="left:235px;top:673.29px;font-size:12.3px;color:#eef6ff;-webkit-text-stroke:0.25px #eef6ff">Total Force:</div>
<div class="t" style="left:235px;top:689.89px;font-size:12.3px;color:#eef6ff;-webkit-text-stroke:0.25px #eef6ff">47412 Raw</div>
<div class="t" style="left:235px;top:706.59px;font-size:12.3px;color:#eef6ff;-webkit-text-stroke:0.25px #eef6ff">Sum</div>
<div class="t" style="right:1107.5px;top:673.29px;font-size:12.3px;color:#eef6ff;-webkit-text-stroke:0.25px #eef6ff">100%</div>
<div class="t" style="left:390px;top:690.69px;font-size:11px;color:#eef6ff;-webkit-text-stroke:0.25px #eef6ff">-</div>
<div class="a" style="left:409px;top:694.7px;width:37.5px;height:4px;background:#dfe6ef"></div>
<div class="a" style="left:398.6px;top:688px;width:11.3px;height:14.8px;background:#e8edf3"></div>
<div class="t" style="left:454px;top:691.69px;font-size:11px;color:#eef6ff;-webkit-text-stroke:0.25px #eef6ff">+</div>
<div class="a" style="left:548.3px;top:67px;width:478.7px;height:656.5px;border:1.5px solid #cfcfcf;border-top:none;border-right:none;background:#fff"></div>
<div class="a" style="left:1025.5px;top:92px;width:1.5px;height:631.5px;background:#cfcfcf"></div>
<div class="a" style="left:692px;top:92px;width:334px;height:1px;background:#d6d6d6"></div>
<div class="a" style="left:548.3px;top:67px;width:144px;height:1px;background:#e6e6e6"></div>
<div class="a" style="left:691.8px;top:67px;width:1px;height:26px;background:#d6d6d6"></div>
<div class="t" style="left:557.5px;top:73.60px;font-size:12.05px;color:#333">5101_Donut7a4_01</div>
<svg class="a" style="left:675px;top:75px;overflow:visible" width="9" height="9" viewBox="0 0 9 9"><path d="M0.7 0.7L8.3 8.3M8.3 0.7L0.7 8.3" stroke="#1a1a1a" stroke-width="1.5"/></svg>
<svg class="a" style="left:1013px;top:76px;overflow:visible" width="10" height="9" viewBox="0 0 10 9"><path d="M0.5 1H9.5" stroke="#111" stroke-width="1.6"/><path d="M0.3 3.6H9.7L5 8.6Z" fill="#111"/></svg>
<div class="a" style="left:552px;top:94px;width:440px;height:558px;background:#000"></div>
<svg class="a" style="left:0;top:0" width="1624" height="882">
<path fill="#000468" fill-rule="evenodd" d="M776.0 529.0L767.0 529.0L753.0 521.8L734.0 519.3L716.0 513.8L690.0 500.6L671.0 486.4L649.3 465.0L637.3 450.0L630.7 440.0L621.4 421.0L615.5 405.0L612.6 393.0L610.9 378.0L609.8 337.0L611.2 321.0L614.4 302.0L619.3 285.0L625.6 269.0L633.4 254.0L642.3 240.0L659.0 220.2L670.0 211.7L688.0 200.5L707.0 191.4L721.0 186.4L735.0 182.6L754.0 179.2L787.0 180.7L802.0 183.5L820.0 188.5L842.0 196.4L857.0 203.5L871.0 211.6L888.0 223.5L918.7 252.0L931.3 267.0L936.5 275.0L944.4 291.0L948.3 302.0L951.5 317.0L953.5 336.0L953.2 377.0L951.4 392.0L948.2 408.0L942.6 421.0L932.6 439.0L916.7 461.0L903.9 476.0L892.0 487.8L878.0 499.2L866.0 507.3L850.0 515.9L836.0 520.8L814.0 525.2L776.0 529.0Z"/>
<path fill="#00089e" fill-rule="evenodd" d="M772.0 513.0L768.0 512.8L756.0 504.9L736.0 503.2L715.0 494.8L682.0 475.7L674.0 469.6L662.7 459.0L657.3 452.0L652.0 442.3L641.3 429.0L632.9 413.0L623.5 382.0L620.6 348.0L620.8 338.0L624.0 308.0L628.6 290.0L636.2 272.0L643.7 258.0L650.7 247.0L660.2 235.0L665.7 229.0L675.0 221.8L692.0 210.6L710.0 201.4L732.0 194.4L755.0 190.0L786.0 191.1L818.0 198.2L860.0 216.7L871.0 223.5L884.0 233.1L909.1 256.0L924.1 274.0L929.4 282.0L937.0 299.0L941.4 313.0L943.0 322.0L944.9 344.0L943.7 380.0L941.3 393.0L937.0 407.8L933.2 414.0L924.9 424.0L913.6 443.0L885.0 475.1L858.0 494.5L852.0 497.0L841.0 499.5L829.0 505.0L811.0 508.5L799.0 508.2L783.0 510.4L772.0 513.0ZM783.4 378.0L788.0 376.0L791.6 372.0L793.7 367.0L793.8 361.0L791.5 356.0L788.0 352.8L783.0 351.0L777.0 351.2L772.0 353.8L769.0 357.3L767.0 363.0L767.2 368.0L769.5 373.0L773.0 376.2L778.0 378.1L783.4 378.0Z"/>
<path fill="#0038f5" fill-rule="evenodd" d="M774.0 503.1L769.0 503.5L757.0 495.6L745.0 493.6L735.0 494.5L730.0 493.0L720.0 486.4L708.0 480.7L696.0 472.2L681.0 464.9L669.8 456.0L664.7 450.0L659.0 440.0L650.0 430.8L638.7 410.0L632.7 390.0L627.8 365.0L627.0 355.0L627.1 333.0L629.6 310.0L632.3 297.0L640.2 277.0L651.3 256.0L659.0 245.2L669.1 234.0L679.0 226.0L695.0 215.4L710.0 207.5L726.0 201.7L756.0 195.3L787.0 196.5L815.0 202.3L835.0 212.1L858.0 221.7L881.0 237.4L893.0 249.4L907.0 260.9L925.8 286.0L932.0 301.0L936.9 318.0L940.1 344.0L939.9 363.0L938.3 382.0L936.6 390.0L931.9 404.0L928.1 410.0L916.9 423.0L909.0 439.0L878.0 471.0L873.0 474.7L864.0 479.3L856.0 486.1L851.0 488.6L831.0 494.8L813.0 498.4L801.0 498.6L774.0 503.1ZM785.9 383.0L791.0 379.8L795.4 374.0L797.9 366.0L797.6 359.0L794.4 353.0L790.0 349.3L783.0 347.2L776.0 347.5L770.0 350.7L765.8 356.0L763.3 364.0L763.7 371.0L767.0 376.9L773.0 381.8L780.0 383.9L785.9 383.0Z"/>
<path fill="#0068ff" fill-rule="evenodd" d="M779.0 495.1L770.0 493.9L759.0 486.3L749.0 486.4L738.0 484.6L711.0 475.1L697.7 465.0L684.0 456.6L671.0 445.4L664.0 434.4L655.9 428.0L651.6 417.0L645.2 408.0L642.5 402.0L638.5 389.0L636.8 372.0L634.2 362.0L632.5 342.0L634.7 312.0L639.4 292.0L643.8 281.0L655.4 259.0L663.0 248.3L673.0 238.1L685.0 228.7L696.0 220.8L710.3 213.0L728.0 206.1L756.0 199.7L789.0 201.1L812.0 206.4L832.0 216.2L854.0 225.0L878.0 241.2L890.0 253.6L905.0 264.8L921.9 288.0L928.3 304.0L933.7 326.0L935.2 338.0L936.0 356.0L933.7 381.0L931.7 389.0L925.0 404.4L911.8 421.0L905.9 432.0L892.0 448.5L880.5 457.0L872.0 466.7L860.5 473.0L848.0 482.0L829.0 487.9L810.0 490.3L798.0 489.3L785.0 493.9L779.0 495.1ZM786.3 390.0L793.0 385.4L799.7 378.0L802.9 366.0L802.9 359.0L798.8 351.0L793.4 346.0L785.0 343.3L775.0 343.4L768.0 347.2L762.7 354.0L759.6 363.0L759.2 372.0L763.0 379.0L771.5 387.0L779.0 390.2L786.3 390.0Z"/>
<path fill="#0090ff" fill-rule="evenodd" d="M783.0 487.2L778.0 487.6L771.0 485.8L760.0 479.5L749.0 480.4L744.0 479.8L717.0 470.8L711.8 468.0L703.4 461.0L693.0 454.9L675.0 441.5L672.3 438.0L667.5 428.0L661.0 420.7L649.0 402.0L645.1 394.0L642.1 381.0L637.0 340.0L637.2 334.0L639.0 325.0L638.8 312.0L643.0 294.0L647.7 282.0L654.4 272.0L660.2 259.0L664.5 253.0L675.0 242.0L700.0 223.4L714.0 215.9L729.0 209.8L757.0 202.9L766.0 202.8L789.0 204.5L809.0 209.8L848.3 226.0L863.1 237.0L876.0 244.6L888.0 256.8L903.0 267.4L909.8 278.0L919.3 290.0L925.1 304.0L931.6 335.0L932.2 355.0L930.7 366.0L930.2 379.0L927.8 388.0L921.0 402.8L907.7 419.0L902.1 428.0L895.0 435.0L887.2 445.0L869.0 460.7L839.0 478.1L825.0 481.7L813.0 480.9L799.0 482.8L783.0 487.2ZM787.9 395.0L800.0 385.8L804.7 380.0L807.5 366.0L807.2 359.0L801.4 348.0L796.2 343.0L786.0 339.9L774.0 339.9L766.2 344.0L759.7 352.0L755.4 365.0L755.2 374.0L759.6 381.0L771.0 391.8L780.0 395.5L784.0 395.8L787.9 395.0Z"/>
<path fill="#00b8f8" fill-rule="evenodd" d="M797.0 477.1L790.0 477.8L781.0 476.4L772.0 476.8L762.0 473.0L750.0 473.9L742.0 472.4L719.0 464.2L700.0 452.0L690.3 444.0L680.0 439.2L675.6 434.0L671.2 421.0L664.0 413.0L650.0 391.4L648.0 386.6L645.8 376.0L641.5 340.0L643.5 325.0L643.3 310.0L646.2 297.0L650.0 286.3L658.3 274.0L665.4 259.0L677.0 245.3L701.0 227.4L716.0 219.2L731.0 212.7L747.0 208.0L757.0 206.1L767.0 205.6L778.0 207.4L789.0 207.8L804.0 211.9L844.0 227.4L858.2 238.0L873.0 246.8L887.0 260.1L900.9 270.0L916.2 291.0L922.2 304.0L927.9 332.0L928.7 351.0L926.7 362.0L926.7 377.0L925.2 384.0L918.8 399.0L903.2 417.0L896.9 426.0L889.4 433.0L877.0 446.9L858.1 459.0L848.0 464.2L839.0 470.5L826.0 474.5L812.0 473.7L797.0 477.1ZM788.5 400.0L798.0 394.4L805.0 388.4L808.0 384.5L810.6 375.0L811.5 365.0L811.0 359.0L804.0 345.5L798.0 339.9L786.0 336.5L778.0 335.9L772.0 336.8L764.0 341.1L755.7 351.0L751.3 365.0L751.1 375.0L755.7 383.0L770.0 396.3L780.0 400.6L788.5 400.0Z"/>
<path fill="#00e2fa" fill-rule="evenodd" d="M802.0 468.0L790.0 468.3L780.0 466.6L772.0 467.7L763.0 463.8L754.0 464.5L745.0 463.8L728.0 460.3L721.0 457.5L706.0 448.0L697.0 440.0L685.1 435.0L682.0 432.8L680.0 429.4L676.9 419.0L654.9 388.0L652.0 380.0L648.1 361.0L646.2 340.0L648.1 326.0L648.4 309.0L651.2 297.0L655.0 286.9L661.4 278.0L669.8 261.0L681.1 247.0L701.0 232.3L716.0 223.6L734.0 215.4L747.0 211.5L766.0 208.7L792.0 211.9L822.0 222.2L842.9 231.0L854.7 240.0L870.0 248.9L884.9 263.0L898.0 272.4L912.8 292.0L917.7 301.0L920.0 308.0L924.0 333.0L924.8 350.0L922.4 363.0L921.9 380.0L914.0 397.0L906.6 406.0L898.0 414.0L892.0 422.0L873.0 441.2L861.0 445.8L853.0 452.8L844.0 457.1L834.0 464.3L828.0 465.6L814.0 466.0L802.0 468.0ZM788.3 406.0L794.0 404.1L800.0 400.5L807.8 394.0L811.7 389.0L814.7 379.0L815.8 367.0L815.3 360.0L813.3 354.0L808.8 346.0L805.1 341.0L801.0 337.6L795.0 334.6L789.0 333.1L779.0 332.1L773.0 332.6L763.0 337.0L756.1 343.0L752.3 348.0L747.4 364.0L747.3 376.0L749.4 382.0L753.0 387.5L768.0 400.8L778.0 405.9L788.3 406.0Z"/>
<path fill="#33dd90" fill-rule="evenodd" d="M774.0 456.2L765.0 452.5L752.0 456.2L729.0 455.0L723.6 452.0L716.0 444.2L708.0 440.2L700.0 434.5L692.0 431.5L688.0 429.0L681.6 417.0L658.0 382.2L651.3 355.0L650.3 344.0L653.1 309.0L657.2 293.0L659.5 288.0L665.0 279.9L670.9 267.0L681.0 252.3L704.0 234.6L716.0 227.5L731.0 220.2L744.0 215.4L766.0 211.7L794.0 215.6L816.0 222.8L837.0 231.8L853.0 242.5L866.5 250.0L882.0 264.8L894.9 274.0L907.8 290.0L916.4 306.0L919.9 329.0L921.1 346.0L920.8 353.0L918.6 364.0L918.2 377.0L915.3 385.0L904.0 399.9L891.2 412.0L871.0 434.8L858.0 438.3L850.6 445.0L846.0 447.4L837.0 448.9L827.0 447.1L818.0 453.8L815.0 453.9L812.0 452.0L810.6 449.0L810.0 443.9L808.0 443.0L804.4 445.0L798.6 452.0L794.0 454.4L789.0 455.6L781.0 454.7L774.0 456.2ZM791.9 412.0L797.0 409.9L808.0 400.9L815.7 392.0L818.1 385.0L819.7 373.0L819.9 366.0L818.9 359.0L816.3 352.0L811.5 344.0L806.3 338.0L801.0 334.0L795.0 331.1L789.0 329.6L779.0 328.6L772.0 329.3L766.0 331.5L760.3 335.0L753.0 340.8L749.8 345.0L747.0 352.0L743.9 365.0L743.6 372.0L744.6 379.0L747.0 386.2L750.4 392.0L769.0 407.3L777.0 411.1L791.9 412.0ZM792.9 441.0L793.5 440.0L792.0 438.7L789.2 439.0L788.5 440.0L790.0 441.7L792.9 441.0Z"/>
<path fill="#00cc00" fill-rule="evenodd" d="M741.0 448.1L735.0 448.9L731.6 448.0L729.5 446.0L727.0 439.6L724.8 437.0L711.0 432.6L697.9 424.0L686.0 412.9L679.8 402.0L662.8 380.0L660.5 374.0L654.5 346.0L658.3 305.0L662.7 291.0L668.3 282.0L673.7 270.0L681.6 258.0L687.0 251.6L708.0 236.2L732.0 223.1L745.0 218.4L767.0 214.7L792.0 218.2L811.0 223.7L821.5 228.0L838.0 236.1L851.0 244.7L862.0 250.5L869.0 256.0L879.0 266.3L893.0 276.8L901.3 286.0L913.0 306.5L915.3 317.0L917.0 347.0L913.2 377.0L909.7 384.0L902.1 393.0L886.0 405.8L879.0 414.8L867.4 426.0L864.0 427.0L850.0 425.2L841.5 417.0L833.0 413.8L831.0 406.4L828.0 402.9L824.0 401.3L816.5 401.0L821.7 389.0L823.8 376.0L824.1 368.0L823.2 360.0L821.4 354.0L813.4 341.0L803.0 331.6L794.0 327.2L778.0 325.2L768.0 327.3L754.0 335.6L748.3 341.0L743.5 353.0L740.2 369.0L741.5 381.0L745.0 392.6L748.0 397.1L757.0 403.3L766.9 413.0L766.1 417.0L768.3 424.0L768.2 429.0L765.6 435.0L758.0 443.1L754.0 445.1L741.0 448.1Z"/>
<path fill="#a0e000" fill-rule="evenodd" d="M723.0 419.0L715.0 417.7L712.9 416.0L719.4 407.0L719.4 403.0L717.0 399.7L712.0 397.6L707.0 397.8L704.2 400.0L700.0 406.8L696.0 406.4L693.0 404.3L668.9 379.0L665.0 372.0L663.6 358.0L659.8 347.0L659.6 342.0L662.8 310.0L666.3 295.0L678.4 271.0L689.0 255.7L693.2 252.0L712.0 238.3L731.3 227.0L740.0 223.3L765.0 218.1L789.0 220.9L814.2 228.0L837.0 239.5L858.0 252.1L889.4 279.0L898.1 288.0L910.0 311.6L911.8 320.0L912.9 336.0L910.7 355.0L909.3 359.0L907.0 374.2L903.0 382.8L897.0 388.9L890.0 392.1L876.0 393.6L867.0 397.7L852.0 398.3L842.0 395.8L834.4 388.0L828.0 383.9L828.4 369.0L826.9 357.0L823.3 349.0L815.5 338.0L804.0 327.8L798.0 324.2L788.0 322.1L774.0 321.9L767.0 324.0L760.0 327.7L749.0 335.0L745.0 340.0L739.6 354.0L736.5 368.0L738.0 386.9L742.0 398.0L731.5 411.0L728.0 416.9L726.0 418.4L723.0 419.0Z"/>
<path fill="#d0ea00" fill-rule="evenodd" d="M711.0 387.1L703.0 387.7L698.0 387.0L690.0 381.5L682.0 380.6L677.0 378.9L670.6 373.0L668.5 366.0L668.9 355.0L664.9 343.0L667.5 312.0L672.8 292.0L681.1 276.0L688.9 265.0L692.6 258.0L696.7 254.0L714.0 241.5L724.0 235.8L732.0 229.9L739.0 226.6L764.0 220.9L786.0 223.1L810.0 229.4L836.0 242.4L857.0 255.8L883.9 279.0L895.0 291.3L906.2 316.0L908.4 329.0L908.2 338.0L905.0 353.7L901.8 362.0L899.3 376.0L897.0 380.2L894.0 382.3L890.4 382.0L883.0 378.0L863.0 385.5L859.0 385.9L855.0 384.7L848.0 378.7L839.0 373.8L835.9 371.0L832.0 365.5L829.8 355.0L825.8 347.0L817.9 336.0L807.0 325.8L802.0 322.1L796.6 320.0L789.0 318.6L779.0 318.3L772.0 319.2L763.0 322.4L745.9 334.0L741.8 340.0L735.4 357.0L732.9 369.0L733.0 382.2L724.0 382.9L711.0 387.1Z"/>
<path fill="#ffee00" fill-rule="evenodd" d="M717.0 368.1L714.0 367.8L708.0 365.3L698.0 365.5L688.0 362.4L685.0 363.3L680.0 366.6L678.0 365.8L676.8 357.0L672.2 342.0L673.7 330.0L673.6 313.0L680.9 289.0L692.0 272.3L698.0 259.6L733.0 233.0L743.0 228.6L764.0 223.9L786.0 226.1L808.0 232.3L837.0 246.8L853.6 259.0L862.0 266.7L875.0 275.7L879.4 280.0L890.7 296.0L899.8 320.0L901.5 329.0L901.0 333.7L899.0 336.8L894.0 340.4L891.0 347.0L888.0 349.7L884.0 351.2L875.0 346.6L871.0 346.6L868.1 348.0L864.3 352.0L863.2 355.0L867.2 361.0L867.4 363.0L865.2 366.0L862.0 366.8L859.4 366.0L848.8 359.0L844.7 349.0L837.0 339.1L834.0 338.3L829.0 340.7L826.0 341.0L818.0 330.7L805.0 319.4L801.0 317.5L789.0 314.9L780.0 314.7L772.0 315.8L759.0 320.6L744.0 331.6L739.9 337.0L734.8 348.0L729.0 365.3L717.0 368.1Z"/>
<path fill="#ffbe3c" fill-rule="evenodd" d="M711.0 353.0L701.0 353.4L695.0 349.0L684.0 345.2L682.0 342.8L681.2 338.0L682.3 328.0L679.9 320.0L679.7 315.0L681.6 310.0L687.5 301.0L688.5 289.0L695.3 278.0L700.7 265.0L704.9 260.0L737.0 234.1L743.0 231.5L760.0 227.0L767.0 226.5L784.0 228.4L802.0 233.5L835.8 250.0L859.0 269.5L875.1 281.0L884.5 296.0L888.9 308.0L889.0 313.6L883.0 321.7L870.0 331.4L862.0 336.0L859.0 336.5L854.0 335.1L851.0 333.3L845.7 325.0L840.8 321.0L836.0 319.7L826.0 319.5L817.0 315.7L800.0 300.3L775.0 296.5L771.4 299.0L770.3 308.0L767.4 312.0L756.0 316.2L749.0 324.0L737.7 330.0L734.2 334.0L731.7 342.0L726.8 347.0L718.8 351.0L711.0 353.0Z"/>
<path fill="#ff8c00" fill-rule="evenodd" d="M719.0 313.1L715.0 313.2L707.0 311.3L705.0 310.2L703.7 308.0L702.4 299.0L699.2 288.0L700.7 280.0L704.4 270.0L709.0 263.6L738.0 237.4L746.0 233.7L763.0 229.3L785.0 231.4L800.0 236.0L806.0 238.8L815.0 244.9L831.5 252.0L871.0 284.4L874.2 290.0L876.5 301.0L875.7 304.0L873.0 305.7L858.0 305.9L845.0 307.3L841.9 306.0L836.0 299.7L833.0 298.2L829.0 298.8L822.0 302.5L819.0 302.0L816.7 299.0L814.0 290.0L811.0 287.6L788.0 287.8L777.0 286.7L770.0 288.3L763.6 291.0L753.1 302.0L744.0 308.0L740.0 309.1L733.0 308.2L726.0 311.7L719.0 313.1Z"/>
<path fill="#ff6000" fill-rule="evenodd" d="M746.0 290.4L743.0 290.5L735.0 286.1L727.0 286.2L723.0 284.8L713.5 278.0L712.4 275.0L712.7 272.0L714.9 268.0L727.0 254.2L740.0 241.2L748.0 236.7L761.0 232.8L786.0 235.0L799.6 240.0L813.0 250.1L826.9 257.0L833.0 266.3L840.7 272.0L840.0 273.5L829.0 278.3L820.0 275.3L809.0 273.3L797.0 276.1L780.0 276.5L767.0 281.8L756.0 284.8L746.0 290.4Z"/>
<path fill="#ff1e00" fill-rule="evenodd" d="M759.0 275.0L749.0 275.9L743.0 274.9L734.3 269.0L730.4 263.0L732.1 258.0L741.0 245.8L749.0 240.2L757.0 237.0L764.0 235.9L790.0 239.6L796.7 244.0L809.6 256.0L812.3 260.0L811.9 262.0L808.0 264.2L777.0 269.4L765.0 274.0L759.0 275.0Z"/>
<rect x="754" y="95" width="6.4" height="557" fill="#0a14f2"/>
<rect x="760.4" y="95" width="5.7" height="557" fill="#5ab8e6"/>
</svg>
<div class="a" style="left:992px;top:94px;width:16px;height:558px;background:#f0f0f0"></div>
<div class="a" style="left:993px;top:222px;width:15px;height:295px;background:#cdcdcd"></div>
<svg class="a" style="left:996px;top:99px;overflow:visible" width="9" height="6" viewBox="0 0 9 6"><path d="M0.8 5L4.5 1.2L8.2 5" fill="none" stroke="#a0a0a0" stroke-width="1.1"/></svg>
<svg class="a" style="left:996px;top:640px;overflow:visible" width="9" height="6" viewBox="0 0 9 6"><path d="M0.8 1L4.5 4.8L8.2 1" fill="none" stroke="#a0a0a0" stroke-width="1.1"/></svg>
<div class="a" style="left:552px;top:652px;width:440px;height:17px;background:#f0f0f0"></div>
<div class="a" style="left:665px;top:653px;width:225px;height:15px;background:#cdcdcd"></div>
<svg class="a" style="left:558px;top:656px;overflow:visible" width="6" height="9" viewBox="0 0 6 9"><path d="M5 0.8L1.2 4.5L5 8.2" fill="none" stroke="#a0a0a0" stroke-width="1.1"/></svg>
<svg class="a" style="left:979px;top:656px;overflow:visible" width="6" height="9" viewBox="0 0 6 9"><path d="M1 0.8L4.8 4.5L1 8.2" fill="none" stroke="#a0a0a0" stroke-width="1.1"/></svg>
<svg class="a" style="left:1013.5px;top:97px;overflow:visible" width="8" height="12" viewBox="0 0 8 12"><path d="M6.5 1L1.5 6L6.5 11" fill="none" stroke="#111" stroke-width="2"/></svg>
<div class="a" style="left:552px;top:670px;width:472px;height:50.5px;background:#0565c1"></div>
<div class="t" style="left:566.5px;top:690.19px;font-size:12.3px;color:#eef6ff;-webkit-text-stroke:0.25px #eef6ff">Frame 1 of 1</div>
<div class="t" style="left:719.5px;top:673.29px;font-size:12.3px;color:#eef6ff;-webkit-text-stroke:0.25px #eef6ff">Total Force:</div>
<div class="t" style="left:719.5px;top:689.89px;font-size:12.3px;color:#eef6ff;-webkit-text-stroke:0.25px #eef6ff">18236 Raw</div>
<div class="t" style="left:719.5px;top:706.59px;font-size:12.3px;color:#eef6ff;-webkit-text-stroke:0.25px #eef6ff">Sum</div>
<div class="t" style="right:622.5px;top:673.29px;font-size:12.3px;color:#eef6ff;-webkit-text-stroke:0.25px #eef6ff">173%</div>
<div class="t" style="left:876px;top:690.69px;font-size:11px;color:#eef6ff;-webkit-text-stroke:0.25px #eef6ff">-</div>
<div class="a" style="left:899px;top:694.7px;width:32px;height:4px;background:#dfe6ef"></div>
<div class="a" style="left:890px;top:688px;width:11.3px;height:14.8px;background:#e8edf3"></div>
<div class="t" style="left:939px;top:691.69px;font-size:11px;color:#eef6ff;-webkit-text-stroke:0.25px #eef6ff">+</div>
<div class="a" style="left:1034.3px;top:67px;width:478.5px;height:655.8px;border:1.5px solid #cfcfcf;border-top:none;border-right:none;background:#fff"></div>
<div class="a" style="left:1511.3px;top:92.3px;width:1.5px;height:630.5px;background:#cfcfcf"></div>
<div class="a" style="left:1115px;top:92.3px;width:397px;height:1px;background:#d6d6d6"></div>
<div class="a" style="left:1034.3px;top:67px;width:81px;height:1px;background:#e6e6e6"></div>
<div class="a" style="left:1115px;top:67px;width:1px;height:26px;background:#d6d6d6"></div>
<div class="t" style="left:1041px;top:71.39px;font-size:12.3px;color:#333">Graph-2</div>
<svg class="a" style="left:1098px;top:74px;overflow:visible" width="9" height="9" viewBox="0 0 9 9"><path d="M0.7 0.7L8.3 8.3M8.3 0.7L0.7 8.3" stroke="#1a1a1a" stroke-width="1.5"/></svg>
<div class="a" style="left:1037px;top:89.3px;width:75.5px;height:2px;background:#2a6fb5"></div>
<svg class="a" style="left:1497px;top:76px;overflow:visible" width="10" height="9" viewBox="0 0 10 9"><path d="M0.5 1H9.5" stroke="#111" stroke-width="1.6"/><path d="M0.3 3.6H9.7L5 8.6Z" fill="#111"/></svg>
<div class="a" style="left:1494px;top:95.5px;width:14.5px;height:14px;background:#f2f2f2"></div>
<svg class="a" style="left:1497.5px;top:97px;overflow:visible" width="8" height="12" viewBox="0 0 8 12"><path d="M6.5 1L1.5 6L6.5 11" fill="none" stroke="#111" stroke-width="2"/></svg>
<svg class="a" style="left:1034px;top:92px" width="478" height="630" viewBox="1034 92 478 630">
<text x="1292.5" y="135.2" text-anchor="middle" font-family="Liberation Sans" font-weight="bold" font-size="18.25" fill="#111">Pressure profile</text>
<rect x="1084.2" y="148.4" width="416.0999999999999" height="514.2" fill="none" stroke="#222" stroke-width="1.3"/>
<text x="1072.8" y="662.60" text-anchor="end" font-family="Liberation Sans" font-size="12.3" fill="#333">0</text>
<text x="1072.8" y="590.69" text-anchor="end" font-family="Liberation Sans" font-size="12.3" fill="#333">1</text>
<text x="1072.8" y="518.78" text-anchor="end" font-family="Liberation Sans" font-size="12.3" fill="#333">2</text>
<text x="1072.8" y="446.87" text-anchor="end" font-family="Liberation Sans" font-size="12.3" fill="#333">3</text>
<text x="1072.8" y="374.96" text-anchor="end" font-family="Liberation Sans" font-size="12.3" fill="#333">4</text>
<text x="1072.8" y="303.05" text-anchor="end" font-family="Liberation Sans" font-size="12.3" fill="#333">5</text>
<text x="1072.8" y="231.14" text-anchor="end" font-family="Liberation Sans" font-size="12.3" fill="#333">6</text>
<text x="1072.8" y="159.23" text-anchor="end" font-family="Liberation Sans" font-size="12.3" fill="#333">7</text>
<text x="1084.20" y="688" text-anchor="middle" font-family="Liberation Sans" font-size="12.3" fill="#333">0</text>
<text x="1178.50" y="688" text-anchor="middle" font-family="Liberation Sans" font-size="12.3" fill="#333">10</text>
<text x="1272.80" y="688" text-anchor="middle" font-family="Liberation Sans" font-size="12.3" fill="#333">20</text>
<text x="1367.10" y="688" text-anchor="middle" font-family="Liberation Sans" font-size="12.3" fill="#333">30</text>
<text x="1461.40" y="688" text-anchor="middle" font-family="Liberation Sans" font-size="12.3" fill="#333">40</text>
<path d="M1076.7 657.40H1084.2 M1080.2 643.02H1084.2 M1080.2 628.64H1084.2 M1080.2 614.25H1084.2 M1080.2 599.87H1084.2 M1076.7 585.49H1084.2 M1080.2 571.11H1084.2 M1080.2 556.73H1084.2 M1080.2 542.34H1084.2 M1080.2 527.96H1084.2 M1076.7 513.58H1084.2 M1080.2 499.20H1084.2 M1080.2 484.82H1084.2 M1080.2 470.43H1084.2 M1080.2 456.05H1084.2 M1076.7 441.67H1084.2 M1080.2 427.29H1084.2 M1080.2 412.91H1084.2 M1080.2 398.52H1084.2 M1080.2 384.14H1084.2 M1076.7 369.76H1084.2 M1080.2 355.38H1084.2 M1080.2 341.00H1084.2 M1080.2 326.61H1084.2 M1080.2 312.23H1084.2 M1076.7 297.85H1084.2 M1080.2 283.47H1084.2 M1080.2 269.09H1084.2 M1080.2 254.70H1084.2 M1080.2 240.32H1084.2 M1076.7 225.94H1084.2 M1080.2 211.56H1084.2 M1080.2 197.18H1084.2 M1080.2 182.79H1084.2 M1080.2 168.41H1084.2 M1076.7 154.03H1084.2 M1084.20 662.6V669.4 M1103.06 662.6V666.6 M1121.92 662.6V666.6 M1140.78 662.6V666.6 M1159.64 662.6V666.6 M1178.50 662.6V669.4 M1197.36 662.6V666.6 M1216.22 662.6V666.6 M1235.08 662.6V666.6 M1253.94 662.6V666.6 M1272.80 662.6V669.4 M1291.66 662.6V666.6 M1310.52 662.6V666.6 M1329.38 662.6V666.6 M1348.24 662.6V666.6 M1367.10 662.6V669.4 M1385.96 662.6V666.6 M1404.82 662.6V666.6 M1423.68 662.6V666.6 M1442.54 662.6V666.6 M1461.40 662.6V669.4 M1480.26 662.6V666.6 M1499.12 662.6V666.6" stroke="#222" stroke-width="1.4"/>
<text x="1292.5" y="705.5" text-anchor="middle" font-family="Liberation Sans" font-size="12.3" fill="#333">Distance across Columns [cells]</text>
<text transform="translate(1062.5 406) rotate(-90)" x="0" y="0" text-anchor="middle" font-family="Liberation Sans" font-size="12.3" fill="#333">Force [Raw Sum]</text>
<polyline points="1291.66,556.73 1301.09,558.88 1310.52,558.88 1319.95,556.01 1329.38,552.41 1338.81,553.85 1348.24,562.48 1357.67,569.67 1367.10,573.27 1376.53,576.86 1385.96,584.77 1395.39,594.12 1404.82,604.19 1414.25,616.41 1423.68,627.92 1433.11,642.30 1442.54,652.37 1451.97,657.40 1489.69,657.40" fill="none" stroke="#9be89b" stroke-width="4.5" stroke-linejoin="round" opacity="0.6"/>
<polyline points="1084.20,657.40 1121.92,657.40 1131.35,635.83 1140.78,588.37 1150.21,527.24 1159.64,477.62 1169.07,456.05 1178.50,453.18 1187.93,447.42 1197.36,443.11 1206.79,449.58 1216.22,461.09 1225.65,471.15 1235.08,481.22 1244.51,497.04 1253.94,520.77 1263.37,537.31 1272.80,544.50 1282.23,550.97" fill="none" stroke="#d8392c" stroke-width="2.0" stroke-linejoin="round" />
<polyline points="1291.66,556.73 1301.09,558.88 1310.52,558.88 1319.95,556.01 1329.38,552.41 1338.81,553.85 1348.24,562.48 1357.67,569.67 1367.10,573.27 1376.53,576.86 1385.96,584.77 1395.39,594.12 1404.82,604.19 1414.25,616.41 1423.68,627.92 1433.11,642.30 1442.54,652.37 1451.97,657.40 1489.69,657.40" fill="none" stroke="#2ec82e" stroke-width="2.0" stroke-linejoin="round" />
<polyline points="1291.66,238.88 1301.09,251.11 1310.52,226.66 1319.95,211.56 1329.38,218.03 1338.81,259.02 1348.24,319.42 1357.67,417.94 1367.10,532.28 1376.53,624.32 1385.96,657.40 1489.69,657.40" fill="none" stroke="#5ac0d6" stroke-width="2.0" stroke-linejoin="round" />
<polyline points="1084.20,657.40 1197.36,657.40 1206.79,655.24 1216.22,622.16 1225.65,509.98 1235.08,399.24 1244.51,294.97 1253.94,225.94 1263.37,172.73 1272.80,153.31 1282.23,188.55" fill="none" stroke="#1c22b0" stroke-width="2.0" stroke-linejoin="round" />
</svg>
<div class="a" style="left:1518.3px;top:67px;width:105px;height:655.8px;border:1.5px solid #cfcfcf;border-top:none;border-right:none;background:#fff"></div>
<div class="a" style="left:1622.3px;top:92.3px;width:1.5px;height:630.5px;background:#cfcfcf"></div>
<div class="a" style="left:1597.5px;top:92.3px;width:26px;height:1px;background:#d6d6d6"></div>
<div class="a" style="left:1518.3px;top:67px;width:79.5px;height:1px;background:#e6e6e6"></div>
<div class="a" style="left:1597px;top:67px;width:1px;height:26px;background:#d6d6d6"></div>
<div class="t" style="left:1526.7px;top:73.39px;font-size:12.3px;color:#333">Legend</div>
<svg class="a" style="left:1578.5px;top:75px;overflow:visible" width="9" height="9" viewBox="0 0 9 9"><path d="M0.7 0.7L8.3 8.3M8.3 0.7L0.7 8.3" stroke="#1a1a1a" stroke-width="1.5"/></svg>
<svg class="a" style="left:1610px;top:76px;overflow:visible" width="10" height="9" viewBox="0 0 10 9"><path d="M0.5 1H9.5" stroke="#111" stroke-width="1.6"/><path d="M0.3 3.6H9.7L5 8.6Z" fill="#111"/></svg>
<div class="a" style="left:1520px;top:94px;width:39px;height:23px;background:#fff;border-right:1px solid #d0d0d0"></div>
<div class="a" style="left:1559px;top:95px;width:61px;height:20px;background:#ebebeb"></div>
<div class="a" style="left:1520px;top:116.5px;width:100px;height:1px;background:#f0f0f0"></div>
<div class="t" style="left:1526.7px;top:97.99px;font-size:12.3px;color:#333">Raw</div>
<div class="t" style="left:1521.6px;width:100px;text-align:center;top:129.79px;font-size:12.3px;color:#333">Raw</div>
<div class="a" style="left:1537.3px;top:153.7px;width:68px;height:20.600000000000023px;border:1px solid #b4b4b4;background:#fff"></div>
<div class="a" style="left:1587.5px;top:154.7px;width:17px;height:18.600000000000023px;background:#e4e4e4;border-left:1px solid #c8c8c8"></div>
<svg class="a" style="left:1590px;top:154.7px" width="12" height="18.600000000000023"><path d="M1.5 7.800000000000011L6 2.3000000000000114L10.5 7.800000000000011Z" fill="#111"/><path d="M3.5 8.50000000000001H8.5" stroke="#111" stroke-width="1"/><path d="M1.5 10.800000000000011L6 16.30000000000001L10.5 10.800000000000011Z" fill="#111"/></svg>
<div class="a" style="left:1588.5px;top:164.0px;width:16px;height:1px;background:#c8c8c8"></div>
<div class="t" style="right:40.5px;top:158.02px;font-size:12.5px;color:#333">150</div>
<div class="a" style="left:1537.3px;top:471.4px;width:68px;height:20.400000000000034px;border:1px solid #b4b4b4;background:#fff"></div>
<div class="a" style="left:1587.5px;top:472.4px;width:17px;height:18.400000000000034px;background:#e4e4e4;border-left:1px solid #c8c8c8"></div>
<svg class="a" style="left:1590px;top:472.4px" width="12" height="18.400000000000034"><path d="M1.5 7.700000000000017L6 2.200000000000017L10.5 7.700000000000017Z" fill="#111"/><path d="M3.5 8.400000000000016H8.5" stroke="#111" stroke-width="1"/><path d="M1.5 10.700000000000017L6 16.200000000000017L10.5 10.700000000000017Z" fill="#aaa"/></svg>
<div class="a" style="left:1588.5px;top:481.6px;width:16px;height:1px;background:#c8c8c8"></div>
<div class="t" style="right:40.5px;top:475.62px;font-size:12.5px;color:#333">0</div>
<div class="a" style="left:1523.5px;top:179.40px;width:95.2px;height:17.20px;background:#ff22dd"></div>
<div class="t" style="left:1523px;width:100px;text-align:center;top:181.94px;font-size:12.3px;color:#c9a0ff">255</div>
<div class="a" style="left:1523.5px;top:196.30px;width:95.2px;height:17.20px;background:#ff1e00"></div>
<div class="t" style="left:1523px;width:100px;text-align:center;top:198.84px;font-size:12.3px;color:#ff9a20">&gt;=&nbsp; 141</div>
<div class="a" style="left:1523.5px;top:213.20px;width:95.2px;height:17.20px;background:#ff6000"></div>
<div class="t" style="left:1523px;width:100px;text-align:center;top:215.74px;font-size:12.3px;color:#c88030">132</div>
<div class="a" style="left:1523.5px;top:230.10px;width:95.2px;height:17.20px;background:#ff8c00"></div>
<div class="t" style="left:1523px;width:100px;text-align:center;top:232.64px;font-size:12.3px;color:#6a4a10">122</div>
<div class="a" style="left:1523.5px;top:247.00px;width:95.2px;height:17.20px;background:#ffbe3c"></div>
<div class="t" style="left:1523px;width:100px;text-align:center;top:249.54px;font-size:12.3px;color:#3a3020">113</div>
<div class="a" style="left:1523.5px;top:263.90px;width:95.2px;height:17.20px;background:#ffee00"></div>
<div class="t" style="left:1523px;width:100px;text-align:center;top:266.44px;font-size:12.3px;color:#222">104</div>
<div class="a" style="left:1523.5px;top:280.80px;width:95.2px;height:17.20px;background:#d2ea00"></div>
<div class="t" style="left:1523px;width:100px;text-align:center;top:283.34px;font-size:12.3px;color:#222">94</div>
<div class="a" style="left:1523.5px;top:297.70px;width:95.2px;height:17.20px;background:#a4e200"></div>
<div class="t" style="left:1523px;width:100px;text-align:center;top:300.24px;font-size:12.3px;color:#222">85</div>
<div class="a" style="left:1523.5px;top:314.60px;width:95.2px;height:17.20px;background:#00cc00"></div>
<div class="t" style="left:1523px;width:100px;text-align:center;top:317.14px;font-size:12.3px;color:#6a7a20">75</div>
<div class="a" style="left:1523.5px;top:331.50px;width:95.2px;height:17.20px;background:#30dd99"></div>
<div class="t" style="left:1523px;width:100px;text-align:center;top:334.04px;font-size:12.3px;color:#5a8a8a">66</div>
<div class="a" style="left:1523.5px;top:348.40px;width:95.2px;height:17.20px;background:#00e4ff"></div>
<div class="t" style="left:1523px;width:100px;text-align:center;top:350.94px;font-size:12.3px;color:#70a0ff">57</div>
<div class="a" style="left:1523.5px;top:365.30px;width:95.2px;height:17.20px;background:#00bbff"></div>
<div class="t" style="left:1523px;width:100px;text-align:center;top:367.84px;font-size:12.3px;color:#a080ff">47</div>
<div class="a" style="left:1523.5px;top:382.20px;width:95.2px;height:17.20px;background:#0895ff"></div>
<div class="t" style="left:1523px;width:100px;text-align:center;top:384.74px;font-size:12.3px;color:#b0c0ff">38</div>
<div class="a" style="left:1523.5px;top:399.10px;width:95.2px;height:17.20px;background:#0066ff"></div>
<div class="t" style="left:1523px;width:100px;text-align:center;top:401.64px;font-size:12.3px;color:#c8d8ff">29</div>
<div class="a" style="left:1523.5px;top:416.00px;width:95.2px;height:17.20px;background:#0030f2"></div>
<div class="t" style="left:1523px;width:100px;text-align:center;top:418.54px;font-size:12.3px;color:#dde6ff">19</div>
<div class="a" style="left:1523.5px;top:432.90px;width:95.2px;height:17.20px;background:#000a9e"></div>
<div class="t" style="left:1523px;width:100px;text-align:center;top:435.44px;font-size:12.3px;color:#f0f0ff">10</div>
<div class="a" style="left:1523.5px;top:449.80px;width:95.2px;height:17.20px;background:#00065e"></div>
<div class="t" style="left:1523px;width:100px;text-align:center;top:452.34px;font-size:12.3px;color:#f4f4ff">&gt; 0</div>
<div class="a" style="left:64px;top:730.5px;width:138.5px;height:26px;background:#fff;border-top:1px solid #dedede;border-left:1px solid #dedede;border-right:1px solid #d6d6d6"></div>
<div class="t" style="left:72.8px;top:735.67px;font-size:12.2px;color:#333">Region Data Table</div>
<svg class="a" style="left:184.5px;top:737px;overflow:visible" width="9" height="9" viewBox="0 0 9 9"><path d="M0.7 0.7L8.3 8.3M8.3 0.7L0.7 8.3" stroke="#1a1a1a" stroke-width="1.5"/></svg>
<svg class="a" style="left:1610px;top:737.5px;overflow:visible" width="10" height="9" viewBox="0 0 10 9"><path d="M0.5 1H9.5" stroke="#111" stroke-width="1.6"/><path d="M0.3 3.6H9.7L5 8.6Z" fill="#111"/></svg>
<div class="a" style="left:65px;top:756px;width:1559px;height:126px;background:#fff"></div>
<div class="a" style="left:67.5px;top:757.5px;width:1553px;height:121px;border:1px solid #c9c9c9;background:#f4f4f4"></div>
<div class="a" style="left:202.5px;top:756px;width:1422px;height:1px;background:#dedede"></div>
<div class="a" style="left:75px;top:759px;width:1545px;height:25px;background:#a8d0f0"></div>
<div class="a" style="left:76.5px;top:760.2px;width:59.0px;height:23px;background:#0664c0"></div>
<div class="t" style="left:6.0px;width:200px;text-align:center;top:766.27px;font-size:12.2px;color:#eef6ff;-webkit-text-stroke:0.2px #eef6ff">Region</div>
<div class="a" style="left:137.5px;top:760.2px;width:57.0px;height:23px;background:#0664c0"></div>
<div class="t" style="left:66.0px;width:200px;text-align:center;top:766.27px;font-size:12.2px;color:#eef6ff;-webkit-text-stroke:0.2px #eef6ff">Frame</div>
<div class="a" style="left:196.5px;top:760.2px;width:72.5px;height:23px;background:#0664c0"></div>
<div class="t" style="left:132.75px;width:200px;text-align:center;top:766.27px;font-size:12.2px;color:#eef6ff;-webkit-text-stroke:0.2px #eef6ff">Time, Sec</div>
<div class="a" style="left:271px;top:760.2px;width:110px;height:23px;background:#0664c0"></div>
<div class="t" style="left:226.0px;width:200px;text-align:center;top:766.27px;font-size:12.2px;color:#eef6ff;-webkit-text-stroke:0.2px #eef6ff">Force, Raw Sum</div>
<div class="a" style="left:383px;top:760.2px;width:126.5px;height:23px;background:#0664c0"></div>
<div class="t" style="left:346.25px;width:200px;text-align:center;top:766.27px;font-size:12.2px;color:#eef6ff;-webkit-text-stroke:0.2px #eef6ff">Contact Area, cells</div>
<div class="a" style="left:511.5px;top:760.2px;width:145.10000000000002px;height:23px;background:#0664c0"></div>
<div class="t" style="left:484.04999999999995px;width:200px;text-align:center;top:766.27px;font-size:12.2px;color:#eef6ff;-webkit-text-stroke:0.2px #eef6ff">Contact Pressure, Raw</div>
<div class="a" style="left:658.6px;top:760.2px;width:139.39999999999998px;height:23px;background:#0664c0"></div>
<div class="t" style="left:628.3px;width:200px;text-align:center;top:766.27px;font-size:12.2px;color:#eef6ff;-webkit-text-stroke:0.2px #eef6ff">Peak Force, Raw Sum</div>
<div class="a" style="left:800px;top:760.2px;width:126px;height:23px;background:#0664c0"></div>
<div class="t" style="left:763.0px;width:200px;text-align:center;top:766.27px;font-size:12.2px;color:#eef6ff;-webkit-text-stroke:0.2px #eef6ff">Peak Pressure, Raw</div>
<div class="a" style="left:928px;top:760.2px;width:690px;height:23px;background:#0664c0"></div>
<div class="a" style="left:75px;top:784px;width:1545px;height:85px;background:#fff"></div>
<div class="a" style="left:76.3px;top:785.6px;width:59.2px;height:17.8px;background:#ff2312"></div>
<div class="t" style="right:1490.5px;top:788.67px;font-size:12.2px;color:#f0d0c0">reg_0</div>
<div class="t" style="right:1432.0px;top:788.67px;font-size:12.2px;color:#333">1</div>
<div class="t" style="right:1357.5px;top:788.67px;font-size:12.2px;color:#333">0</div>
<div class="t" style="right:1245.5px;top:788.67px;font-size:12.2px;color:#333">32299.00</div>
<div class="t" style="right:1117.0px;top:788.67px;font-size:12.2px;color:#333">471</div>
<div class="t" style="right:969.9px;top:788.67px;font-size:12.2px;color:#333">68.58</div>
<div class="t" style="right:828.5px;top:788.67px;font-size:12.2px;color:#333">591.00</div>
<div class="t" style="right:700.5px;top:788.67px;font-size:12.2px;color:#333">147.75</div>
<div class="a" style="left:75px;top:804.4px;width:1545px;height:1.2px;background:#5079a5"></div>
<div class="a" style="left:76.3px;top:806.6px;width:59.2px;height:17.8px;background:#1fcc1f"></div>
<div class="t" style="right:1490.5px;top:809.67px;font-size:12.2px;color:#6a9a6a">reg_1</div>
<div class="t" style="right:1432.0px;top:809.67px;font-size:12.2px;color:#333">1</div>
<div class="t" style="right:1357.5px;top:809.67px;font-size:12.2px;color:#333">0</div>
<div class="t" style="right:1245.5px;top:809.67px;font-size:12.2px;color:#333">15113.00</div>
<div class="t" style="right:1117.0px;top:809.67px;font-size:12.2px;color:#333">448</div>
<div class="t" style="right:969.9px;top:809.67px;font-size:12.2px;color:#333">33.73</div>
<div class="t" style="right:828.5px;top:809.67px;font-size:12.2px;color:#333">262.00</div>
<div class="t" style="right:700.5px;top:809.67px;font-size:12.2px;color:#333">65.50</div>
<div class="a" style="left:75px;top:825.4px;width:1545px;height:1.2px;background:#5079a5"></div>
<div class="a" style="left:76.3px;top:827.6px;width:59.2px;height:17.8px;background:#0000ec"></div>
<div class="t" style="right:1490.5px;top:830.67px;font-size:12.2px;color:#f4f4ff">reg_2</div>
<div class="t" style="right:1432.0px;top:830.67px;font-size:12.2px;color:#333">1</div>
<div class="t" style="right:1357.5px;top:830.67px;font-size:12.2px;color:#333">0</div>
<div class="t" style="right:1245.5px;top:830.67px;font-size:12.2px;color:#333">8224.00</div>
<div class="t" style="right:1117.0px;top:830.67px;font-size:12.2px;color:#333">123</div>
<div class="t" style="right:969.9px;top:830.67px;font-size:12.2px;color:#333">66.86</div>
<div class="t" style="right:828.5px;top:830.67px;font-size:12.2px;color:#333">588.00</div>
<div class="t" style="right:700.5px;top:830.67px;font-size:12.2px;color:#333">147.00</div>
<div class="a" style="left:75px;top:846.4px;width:1545px;height:1.2px;background:#5079a5"></div>
<div class="a" style="left:76.3px;top:848.6px;width:59.2px;height:17.8px;background:#44bcdc"></div>
<div class="t" style="right:1490.5px;top:851.67px;font-size:12.2px;color:#5a7a8a">reg_3</div>
<div class="t" style="right:1432.0px;top:851.67px;font-size:12.2px;color:#333">1</div>
<div class="t" style="right:1357.5px;top:851.67px;font-size:12.2px;color:#333">0</div>
<div class="t" style="right:1245.5px;top:851.67px;font-size:12.2px;color:#333">10012.00</div>
<div class="t" style="right:1117.0px;top:851.67px;font-size:12.2px;color:#333">152</div>
<div class="t" style="right:969.9px;top:851.67px;font-size:12.2px;color:#333">65.87</div>
<div class="t" style="right:828.5px;top:851.67px;font-size:12.2px;color:#333">581.00</div>
<div class="t" style="right:700.5px;top:851.67px;font-size:12.2px;color:#333">145.25</div>
<div class="a" style="left:75px;top:867.4px;width:1545px;height:1.2px;background:#5079a5"></div>
<div class="a" style="left:135.9px;top:784px;width:1.2px;height:84.5px;background:#5079a5"></div>
<div class="a" style="left:194.9px;top:784px;width:1.2px;height:84.5px;background:#5079a5"></div>
<div class="a" style="left:269.4px;top:784px;width:1.2px;height:84.5px;background:#5079a5"></div>
<div class="a" style="left:381.4px;top:784px;width:1.2px;height:84.5px;background:#5079a5"></div>
<div class="a" style="left:509.9px;top:784px;width:1.2px;height:84.5px;background:#5079a5"></div>
<div class="a" style="left:657.0px;top:784px;width:1.2px;height:84.5px;background:#5079a5"></div>
<div class="a" style="left:798.4px;top:784px;width:1.2px;height:84.5px;background:#5079a5"></div>
<div class="a" style="left:926.4px;top:784px;width:1.2px;height:84.5px;background:#5079a5"></div>
<div class="a" style="left:1618.5px;top:759px;width:1.2px;height:110px;background:#9ab"></div>
<svg class="a" style="left:780px;top:715px;overflow:visible" width="20" height="26" viewBox="0 0 20 26"><path d="M5 5V20.5L8.5 17L11.5 22.5L14 21.5L11 16H16Z" fill="#000" stroke="#000" stroke-width="0.8" stroke-linejoin="round"/></svg></body></html>
